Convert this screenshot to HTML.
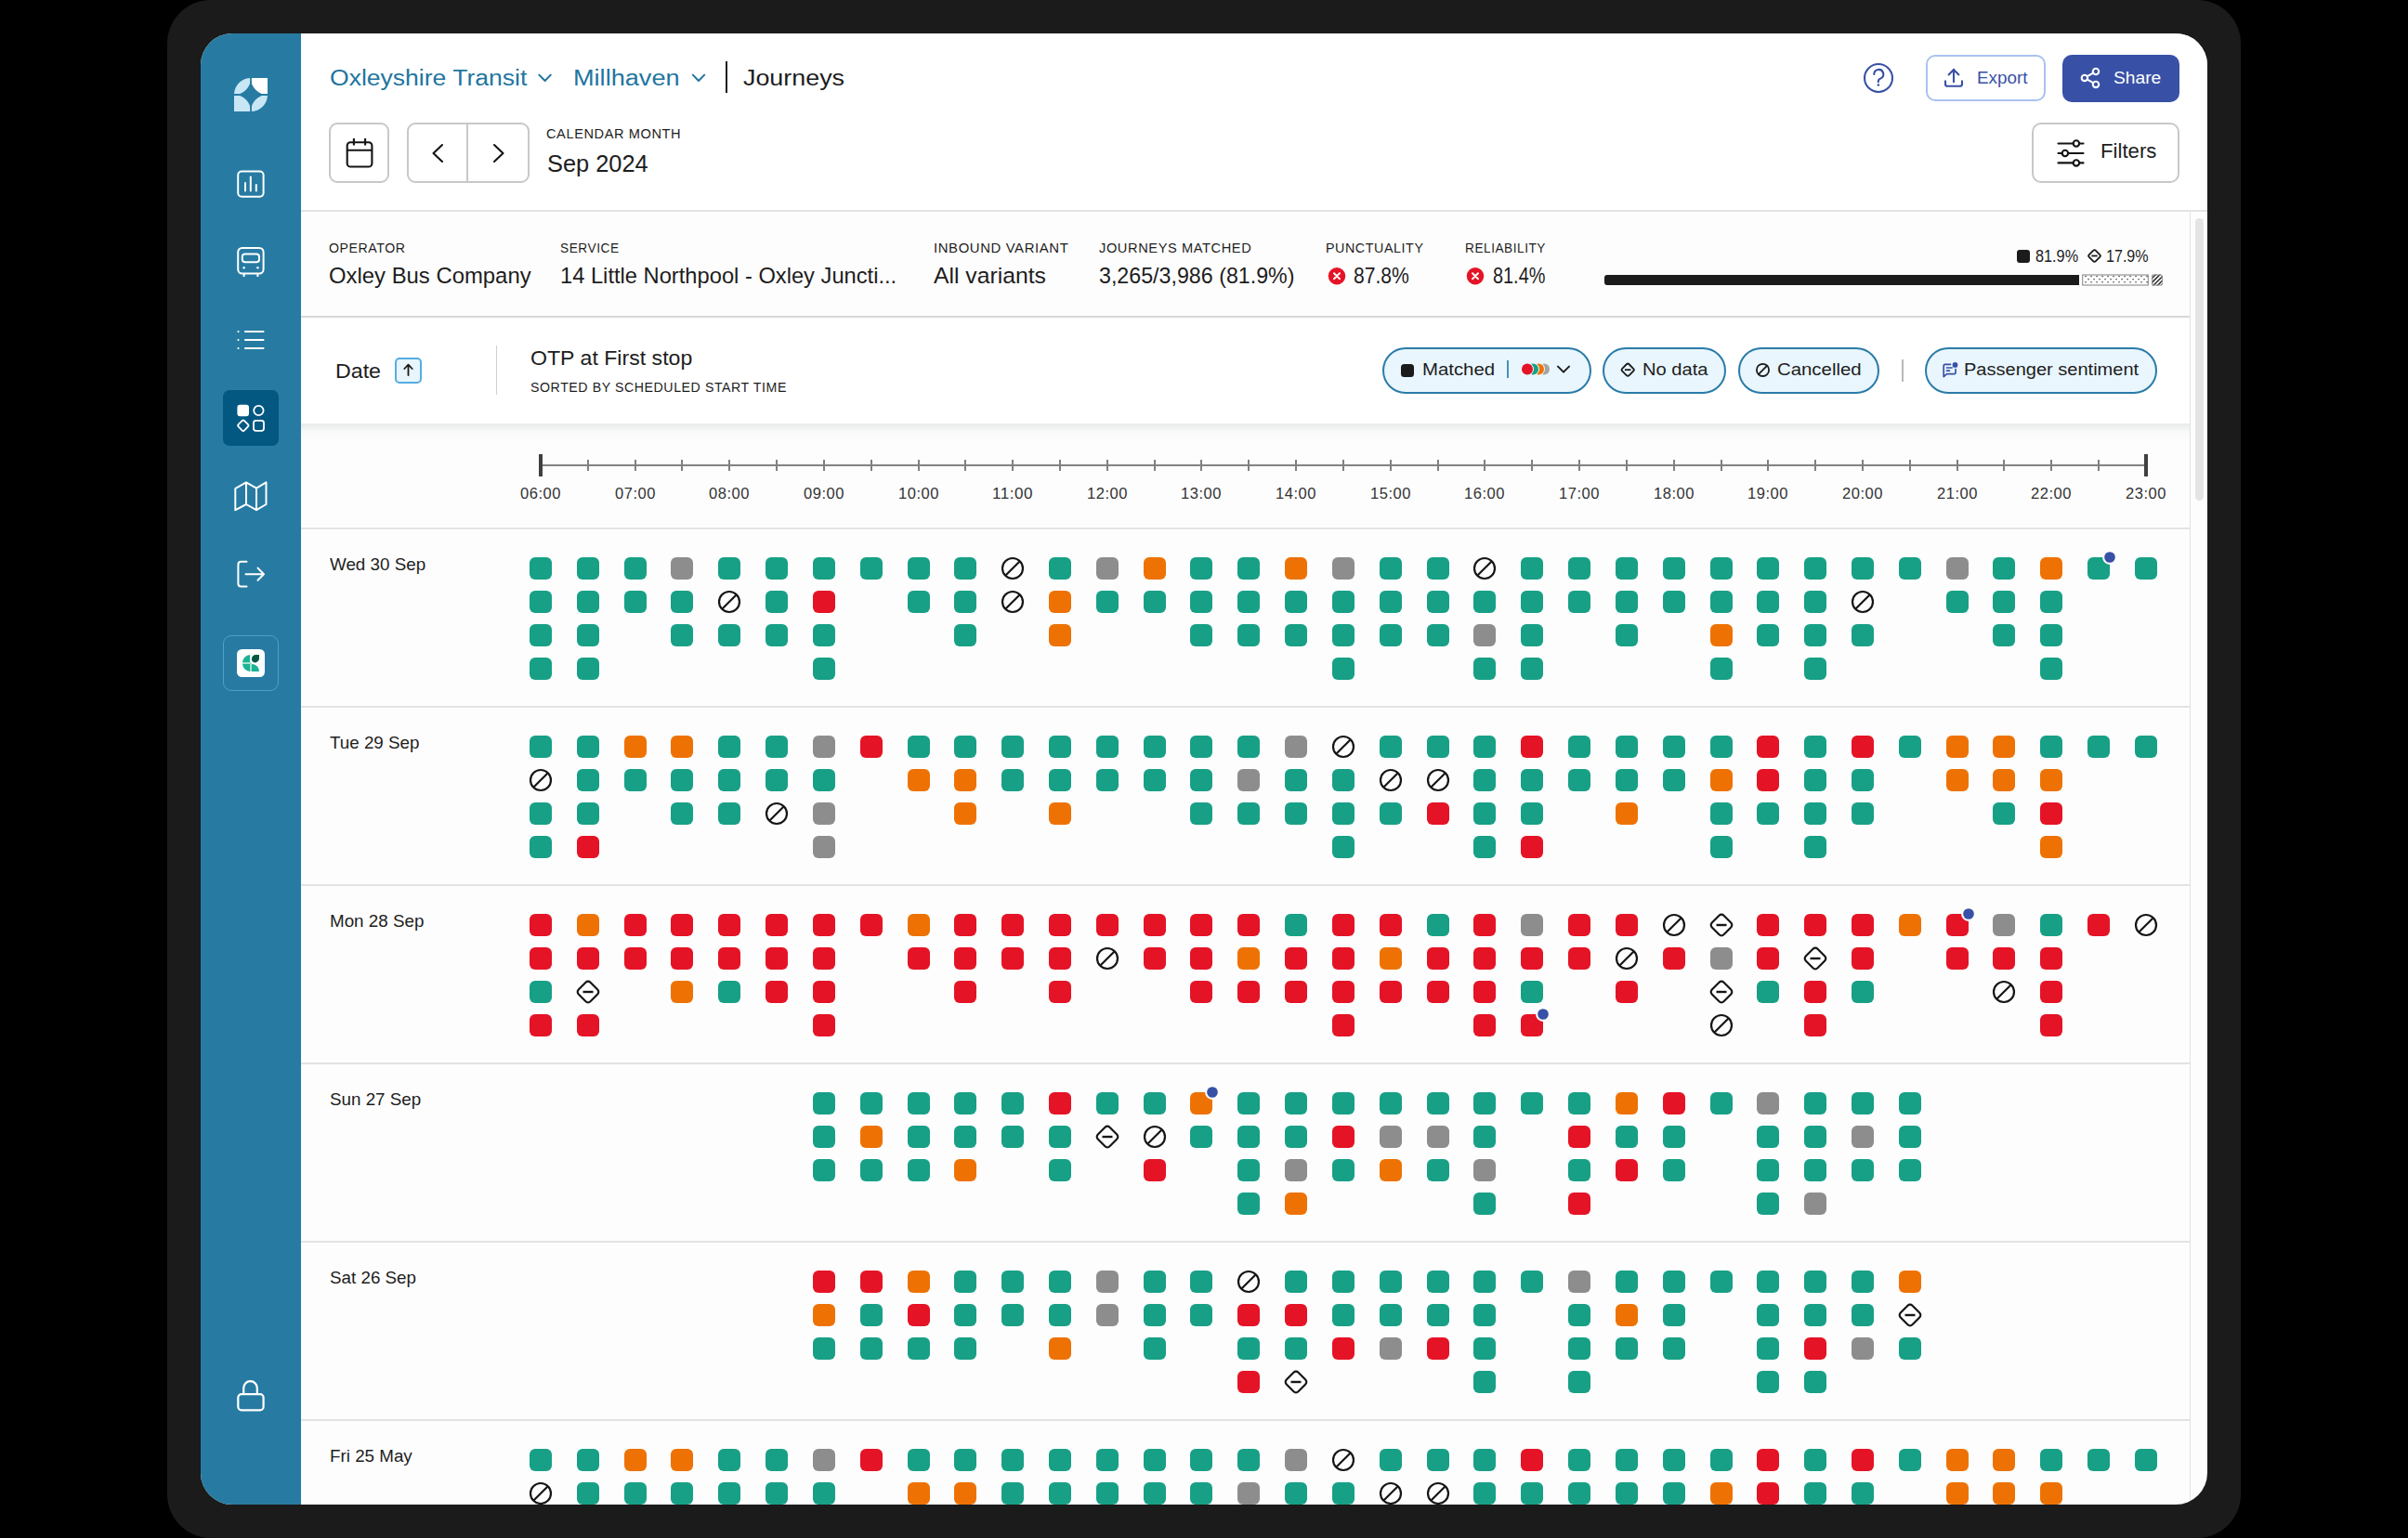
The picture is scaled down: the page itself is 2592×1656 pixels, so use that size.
<!DOCTYPE html><html><head><meta charset="utf-8"><style>
html,body{margin:0;padding:0;background:#000;}
body{width:2592px;height:1656px;overflow:hidden;position:relative;font-family:"Liberation Sans",sans-serif;}
#bezel{position:absolute;left:180px;top:0;width:2232px;height:1656px;border-radius:47px;background:#1b1b1b;}
#screen{position:absolute;left:216px;top:36px;width:2160px;height:1584px;border-radius:34px;background:#fdfdfd;overflow:hidden;}
</style></head><body><div id="bezel"></div><div id="screen">
<div style="position:absolute;left:0.00px;top:0.00px;width:108.00px;height:1584.00px;background:#277ba2"></div>
<div style="position:absolute;left:108.00px;top:0.00px;width:2052.00px;height:190.50px;background:#ffffff"></div>
<div style="position:absolute;left:108.00px;top:190.20px;width:2052.00px;height:2.00px;background:#e3e3e3"></div>
<div style="position:absolute;left:108.00px;top:304.20px;width:2033.00px;height:2.00px;background:#d8d8d8"></div>
<div style="position:absolute;left:108.00px;top:306.20px;width:2033.00px;height:113.80px;background:#ffffff"></div>
<div style="position:absolute;left:108px;top:420px;width:2033px;height:20px;background:linear-gradient(#e8e9ea,rgba(246,247,247,0.6) 45%,rgba(253,253,253,0))"></div>
<div style="position:absolute;left:2140.50px;top:191.00px;width:1.50px;height:1393.00px;background:#e2e2e2"></div>
<div style="position:absolute;left:2146.50px;top:199.00px;width:9.00px;height:304.00px;background:#e4e4e4;border-radius:5px"></div>
<div style="position:absolute;left:108.00px;top:532.20px;width:2033.00px;height:2.00px;background:#e3e3e3"></div>
<div style="position:absolute;left:354.00px;top:564.00px;width:24.00px;height:24.00px;background:#17a086;border-radius:6px"></div>
<div style="position:absolute;left:354.00px;top:600.00px;width:24.00px;height:24.00px;background:#17a086;border-radius:6px"></div>
<div style="position:absolute;left:354.00px;top:636.00px;width:24.00px;height:24.00px;background:#17a086;border-radius:6px"></div>
<div style="position:absolute;left:354.00px;top:672.00px;width:24.00px;height:24.00px;background:#17a086;border-radius:6px"></div>
<div style="position:absolute;left:404.82px;top:564.00px;width:24.00px;height:24.00px;background:#17a086;border-radius:6px"></div>
<div style="position:absolute;left:404.82px;top:600.00px;width:24.00px;height:24.00px;background:#17a086;border-radius:6px"></div>
<div style="position:absolute;left:404.82px;top:636.00px;width:24.00px;height:24.00px;background:#17a086;border-radius:6px"></div>
<div style="position:absolute;left:404.82px;top:672.00px;width:24.00px;height:24.00px;background:#17a086;border-radius:6px"></div>
<div style="position:absolute;left:455.64px;top:564.00px;width:24.00px;height:24.00px;background:#17a086;border-radius:6px"></div>
<div style="position:absolute;left:455.64px;top:600.00px;width:24.00px;height:24.00px;background:#17a086;border-radius:6px"></div>
<div style="position:absolute;left:506.46px;top:564.00px;width:24.00px;height:24.00px;background:#8d8d8d;border-radius:6px"></div>
<div style="position:absolute;left:506.46px;top:600.00px;width:24.00px;height:24.00px;background:#17a086;border-radius:6px"></div>
<div style="position:absolute;left:506.46px;top:636.00px;width:24.00px;height:24.00px;background:#17a086;border-radius:6px"></div>
<div style="position:absolute;left:557.28px;top:564.00px;width:24.00px;height:24.00px;background:#17a086;border-radius:6px"></div>
<svg style="position:absolute;left:556.28px;top:599.00px;" width="26" height="26" viewBox="772.28 635 26 26"><circle cx="785.28" cy="648" r="11" fill="none" stroke="#161616" stroke-width="2.2"/><line x1="793.0799999999999" y1="640.2" x2="777.48" y2="655.8" stroke="#161616" stroke-width="2.2"/></svg>
<div style="position:absolute;left:557.28px;top:636.00px;width:24.00px;height:24.00px;background:#17a086;border-radius:6px"></div>
<div style="position:absolute;left:608.10px;top:564.00px;width:24.00px;height:24.00px;background:#17a086;border-radius:6px"></div>
<div style="position:absolute;left:608.10px;top:600.00px;width:24.00px;height:24.00px;background:#17a086;border-radius:6px"></div>
<div style="position:absolute;left:608.10px;top:636.00px;width:24.00px;height:24.00px;background:#17a086;border-radius:6px"></div>
<div style="position:absolute;left:658.92px;top:564.00px;width:24.00px;height:24.00px;background:#17a086;border-radius:6px"></div>
<div style="position:absolute;left:658.92px;top:600.00px;width:24.00px;height:24.00px;background:#e51326;border-radius:6px"></div>
<div style="position:absolute;left:658.92px;top:636.00px;width:24.00px;height:24.00px;background:#17a086;border-radius:6px"></div>
<div style="position:absolute;left:658.92px;top:672.00px;width:24.00px;height:24.00px;background:#17a086;border-radius:6px"></div>
<div style="position:absolute;left:709.74px;top:564.00px;width:24.00px;height:24.00px;background:#17a086;border-radius:6px"></div>
<div style="position:absolute;left:760.56px;top:564.00px;width:24.00px;height:24.00px;background:#17a086;border-radius:6px"></div>
<div style="position:absolute;left:760.56px;top:600.00px;width:24.00px;height:24.00px;background:#17a086;border-radius:6px"></div>
<div style="position:absolute;left:811.38px;top:564.00px;width:24.00px;height:24.00px;background:#17a086;border-radius:6px"></div>
<div style="position:absolute;left:811.38px;top:600.00px;width:24.00px;height:24.00px;background:#17a086;border-radius:6px"></div>
<div style="position:absolute;left:811.38px;top:636.00px;width:24.00px;height:24.00px;background:#17a086;border-radius:6px"></div>
<svg style="position:absolute;left:861.20px;top:563.00px;" width="26" height="26" viewBox="1077.2 599 26 26"><circle cx="1090.2" cy="612" r="11" fill="none" stroke="#161616" stroke-width="2.2"/><line x1="1098.0" y1="604.2" x2="1082.4" y2="619.8" stroke="#161616" stroke-width="2.2"/></svg>
<svg style="position:absolute;left:861.20px;top:599.00px;" width="26" height="26" viewBox="1077.2 635 26 26"><circle cx="1090.2" cy="648" r="11" fill="none" stroke="#161616" stroke-width="2.2"/><line x1="1098.0" y1="640.2" x2="1082.4" y2="655.8" stroke="#161616" stroke-width="2.2"/></svg>
<div style="position:absolute;left:913.02px;top:564.00px;width:24.00px;height:24.00px;background:#17a086;border-radius:6px"></div>
<div style="position:absolute;left:913.02px;top:600.00px;width:24.00px;height:24.00px;background:#ee7203;border-radius:6px"></div>
<div style="position:absolute;left:913.02px;top:636.00px;width:24.00px;height:24.00px;background:#ee7203;border-radius:6px"></div>
<div style="position:absolute;left:963.84px;top:564.00px;width:24.00px;height:24.00px;background:#8d8d8d;border-radius:6px"></div>
<div style="position:absolute;left:963.84px;top:600.00px;width:24.00px;height:24.00px;background:#17a086;border-radius:6px"></div>
<div style="position:absolute;left:1014.66px;top:564.00px;width:24.00px;height:24.00px;background:#ee7203;border-radius:6px"></div>
<div style="position:absolute;left:1014.66px;top:600.00px;width:24.00px;height:24.00px;background:#17a086;border-radius:6px"></div>
<div style="position:absolute;left:1065.48px;top:564.00px;width:24.00px;height:24.00px;background:#17a086;border-radius:6px"></div>
<div style="position:absolute;left:1065.48px;top:600.00px;width:24.00px;height:24.00px;background:#17a086;border-radius:6px"></div>
<div style="position:absolute;left:1065.48px;top:636.00px;width:24.00px;height:24.00px;background:#17a086;border-radius:6px"></div>
<div style="position:absolute;left:1116.30px;top:564.00px;width:24.00px;height:24.00px;background:#17a086;border-radius:6px"></div>
<div style="position:absolute;left:1116.30px;top:600.00px;width:24.00px;height:24.00px;background:#17a086;border-radius:6px"></div>
<div style="position:absolute;left:1116.30px;top:636.00px;width:24.00px;height:24.00px;background:#17a086;border-radius:6px"></div>
<div style="position:absolute;left:1167.12px;top:564.00px;width:24.00px;height:24.00px;background:#ee7203;border-radius:6px"></div>
<div style="position:absolute;left:1167.12px;top:600.00px;width:24.00px;height:24.00px;background:#17a086;border-radius:6px"></div>
<div style="position:absolute;left:1167.12px;top:636.00px;width:24.00px;height:24.00px;background:#17a086;border-radius:6px"></div>
<div style="position:absolute;left:1217.94px;top:564.00px;width:24.00px;height:24.00px;background:#8d8d8d;border-radius:6px"></div>
<div style="position:absolute;left:1217.94px;top:600.00px;width:24.00px;height:24.00px;background:#17a086;border-radius:6px"></div>
<div style="position:absolute;left:1217.94px;top:636.00px;width:24.00px;height:24.00px;background:#17a086;border-radius:6px"></div>
<div style="position:absolute;left:1217.94px;top:672.00px;width:24.00px;height:24.00px;background:#17a086;border-radius:6px"></div>
<div style="position:absolute;left:1268.76px;top:564.00px;width:24.00px;height:24.00px;background:#17a086;border-radius:6px"></div>
<div style="position:absolute;left:1268.76px;top:600.00px;width:24.00px;height:24.00px;background:#17a086;border-radius:6px"></div>
<div style="position:absolute;left:1268.76px;top:636.00px;width:24.00px;height:24.00px;background:#17a086;border-radius:6px"></div>
<div style="position:absolute;left:1319.58px;top:564.00px;width:24.00px;height:24.00px;background:#17a086;border-radius:6px"></div>
<div style="position:absolute;left:1319.58px;top:600.00px;width:24.00px;height:24.00px;background:#17a086;border-radius:6px"></div>
<div style="position:absolute;left:1319.58px;top:636.00px;width:24.00px;height:24.00px;background:#17a086;border-radius:6px"></div>
<svg style="position:absolute;left:1369.40px;top:563.00px;" width="26" height="26" viewBox="1585.4 599 26 26"><circle cx="1598.4" cy="612" r="11" fill="none" stroke="#161616" stroke-width="2.2"/><line x1="1606.2" y1="604.2" x2="1590.6000000000001" y2="619.8" stroke="#161616" stroke-width="2.2"/></svg>
<div style="position:absolute;left:1370.40px;top:600.00px;width:24.00px;height:24.00px;background:#17a086;border-radius:6px"></div>
<div style="position:absolute;left:1370.40px;top:636.00px;width:24.00px;height:24.00px;background:#8d8d8d;border-radius:6px"></div>
<div style="position:absolute;left:1370.40px;top:672.00px;width:24.00px;height:24.00px;background:#17a086;border-radius:6px"></div>
<div style="position:absolute;left:1421.22px;top:564.00px;width:24.00px;height:24.00px;background:#17a086;border-radius:6px"></div>
<div style="position:absolute;left:1421.22px;top:600.00px;width:24.00px;height:24.00px;background:#17a086;border-radius:6px"></div>
<div style="position:absolute;left:1421.22px;top:636.00px;width:24.00px;height:24.00px;background:#17a086;border-radius:6px"></div>
<div style="position:absolute;left:1421.22px;top:672.00px;width:24.00px;height:24.00px;background:#17a086;border-radius:6px"></div>
<div style="position:absolute;left:1472.04px;top:564.00px;width:24.00px;height:24.00px;background:#17a086;border-radius:6px"></div>
<div style="position:absolute;left:1472.04px;top:600.00px;width:24.00px;height:24.00px;background:#17a086;border-radius:6px"></div>
<div style="position:absolute;left:1522.86px;top:564.00px;width:24.00px;height:24.00px;background:#17a086;border-radius:6px"></div>
<div style="position:absolute;left:1522.86px;top:600.00px;width:24.00px;height:24.00px;background:#17a086;border-radius:6px"></div>
<div style="position:absolute;left:1522.86px;top:636.00px;width:24.00px;height:24.00px;background:#17a086;border-radius:6px"></div>
<div style="position:absolute;left:1573.68px;top:564.00px;width:24.00px;height:24.00px;background:#17a086;border-radius:6px"></div>
<div style="position:absolute;left:1573.68px;top:600.00px;width:24.00px;height:24.00px;background:#17a086;border-radius:6px"></div>
<div style="position:absolute;left:1624.50px;top:564.00px;width:24.00px;height:24.00px;background:#17a086;border-radius:6px"></div>
<div style="position:absolute;left:1624.50px;top:600.00px;width:24.00px;height:24.00px;background:#17a086;border-radius:6px"></div>
<div style="position:absolute;left:1624.50px;top:636.00px;width:24.00px;height:24.00px;background:#ee7203;border-radius:6px"></div>
<div style="position:absolute;left:1624.50px;top:672.00px;width:24.00px;height:24.00px;background:#17a086;border-radius:6px"></div>
<div style="position:absolute;left:1675.32px;top:564.00px;width:24.00px;height:24.00px;background:#17a086;border-radius:6px"></div>
<div style="position:absolute;left:1675.32px;top:600.00px;width:24.00px;height:24.00px;background:#17a086;border-radius:6px"></div>
<div style="position:absolute;left:1675.32px;top:636.00px;width:24.00px;height:24.00px;background:#17a086;border-radius:6px"></div>
<div style="position:absolute;left:1726.14px;top:564.00px;width:24.00px;height:24.00px;background:#17a086;border-radius:6px"></div>
<div style="position:absolute;left:1726.14px;top:600.00px;width:24.00px;height:24.00px;background:#17a086;border-radius:6px"></div>
<div style="position:absolute;left:1726.14px;top:636.00px;width:24.00px;height:24.00px;background:#17a086;border-radius:6px"></div>
<div style="position:absolute;left:1726.14px;top:672.00px;width:24.00px;height:24.00px;background:#17a086;border-radius:6px"></div>
<div style="position:absolute;left:1776.96px;top:564.00px;width:24.00px;height:24.00px;background:#17a086;border-radius:6px"></div>
<svg style="position:absolute;left:1775.96px;top:599.00px;" width="26" height="26" viewBox="1991.96 635 26 26"><circle cx="2004.96" cy="648" r="11" fill="none" stroke="#161616" stroke-width="2.2"/><line x1="2012.76" y1="640.2" x2="1997.16" y2="655.8" stroke="#161616" stroke-width="2.2"/></svg>
<div style="position:absolute;left:1776.96px;top:636.00px;width:24.00px;height:24.00px;background:#17a086;border-radius:6px"></div>
<div style="position:absolute;left:1827.78px;top:564.00px;width:24.00px;height:24.00px;background:#17a086;border-radius:6px"></div>
<div style="position:absolute;left:1878.60px;top:564.00px;width:24.00px;height:24.00px;background:#8d8d8d;border-radius:6px"></div>
<div style="position:absolute;left:1878.60px;top:600.00px;width:24.00px;height:24.00px;background:#17a086;border-radius:6px"></div>
<div style="position:absolute;left:1929.42px;top:564.00px;width:24.00px;height:24.00px;background:#17a086;border-radius:6px"></div>
<div style="position:absolute;left:1929.42px;top:600.00px;width:24.00px;height:24.00px;background:#17a086;border-radius:6px"></div>
<div style="position:absolute;left:1929.42px;top:636.00px;width:24.00px;height:24.00px;background:#17a086;border-radius:6px"></div>
<div style="position:absolute;left:1980.24px;top:564.00px;width:24.00px;height:24.00px;background:#ee7203;border-radius:6px"></div>
<div style="position:absolute;left:1980.24px;top:600.00px;width:24.00px;height:24.00px;background:#17a086;border-radius:6px"></div>
<div style="position:absolute;left:1980.24px;top:636.00px;width:24.00px;height:24.00px;background:#17a086;border-radius:6px"></div>
<div style="position:absolute;left:1980.24px;top:672.00px;width:24.00px;height:24.00px;background:#17a086;border-radius:6px"></div>
<div style="position:absolute;left:2031.06px;top:564.00px;width:24.00px;height:24.00px;background:#17a086;border-radius:6px"></div>
<svg style="position:absolute;left:2046.06px;top:555.00px;" width="18" height="18" viewBox="2262.06 591 18 18"><circle cx="2271.06" cy="600" r="6.9" fill="#3851a6" stroke="#fdfdfd" stroke-width="2.1"/></svg>
<div style="position:absolute;left:2081.88px;top:564.00px;width:24.00px;height:24.00px;background:#17a086;border-radius:6px"></div>
<div style="position:absolute;left:108.00px;top:724.20px;width:2033.00px;height:2.00px;background:#e3e3e3"></div>
<div style="position:absolute;left:354.00px;top:756.00px;width:24.00px;height:24.00px;background:#17a086;border-radius:6px"></div>
<svg style="position:absolute;left:353.00px;top:791.00px;" width="26" height="26" viewBox="569.0 827 26 26"><circle cx="582.0" cy="840" r="11" fill="none" stroke="#161616" stroke-width="2.2"/><line x1="589.8" y1="832.2" x2="574.2" y2="847.8" stroke="#161616" stroke-width="2.2"/></svg>
<div style="position:absolute;left:354.00px;top:828.00px;width:24.00px;height:24.00px;background:#17a086;border-radius:6px"></div>
<div style="position:absolute;left:354.00px;top:864.00px;width:24.00px;height:24.00px;background:#17a086;border-radius:6px"></div>
<div style="position:absolute;left:404.82px;top:756.00px;width:24.00px;height:24.00px;background:#17a086;border-radius:6px"></div>
<div style="position:absolute;left:404.82px;top:792.00px;width:24.00px;height:24.00px;background:#17a086;border-radius:6px"></div>
<div style="position:absolute;left:404.82px;top:828.00px;width:24.00px;height:24.00px;background:#17a086;border-radius:6px"></div>
<div style="position:absolute;left:404.82px;top:864.00px;width:24.00px;height:24.00px;background:#e51326;border-radius:6px"></div>
<div style="position:absolute;left:455.64px;top:756.00px;width:24.00px;height:24.00px;background:#ee7203;border-radius:6px"></div>
<div style="position:absolute;left:455.64px;top:792.00px;width:24.00px;height:24.00px;background:#17a086;border-radius:6px"></div>
<div style="position:absolute;left:506.46px;top:756.00px;width:24.00px;height:24.00px;background:#ee7203;border-radius:6px"></div>
<div style="position:absolute;left:506.46px;top:792.00px;width:24.00px;height:24.00px;background:#17a086;border-radius:6px"></div>
<div style="position:absolute;left:506.46px;top:828.00px;width:24.00px;height:24.00px;background:#17a086;border-radius:6px"></div>
<div style="position:absolute;left:557.28px;top:756.00px;width:24.00px;height:24.00px;background:#17a086;border-radius:6px"></div>
<div style="position:absolute;left:557.28px;top:792.00px;width:24.00px;height:24.00px;background:#17a086;border-radius:6px"></div>
<div style="position:absolute;left:557.28px;top:828.00px;width:24.00px;height:24.00px;background:#17a086;border-radius:6px"></div>
<div style="position:absolute;left:608.10px;top:756.00px;width:24.00px;height:24.00px;background:#17a086;border-radius:6px"></div>
<div style="position:absolute;left:608.10px;top:792.00px;width:24.00px;height:24.00px;background:#17a086;border-radius:6px"></div>
<svg style="position:absolute;left:607.10px;top:827.00px;" width="26" height="26" viewBox="823.1 863 26 26"><circle cx="836.1" cy="876" r="11" fill="none" stroke="#161616" stroke-width="2.2"/><line x1="843.9" y1="868.2" x2="828.3000000000001" y2="883.8" stroke="#161616" stroke-width="2.2"/></svg>
<div style="position:absolute;left:658.92px;top:756.00px;width:24.00px;height:24.00px;background:#8d8d8d;border-radius:6px"></div>
<div style="position:absolute;left:658.92px;top:792.00px;width:24.00px;height:24.00px;background:#17a086;border-radius:6px"></div>
<div style="position:absolute;left:658.92px;top:828.00px;width:24.00px;height:24.00px;background:#8d8d8d;border-radius:6px"></div>
<div style="position:absolute;left:658.92px;top:864.00px;width:24.00px;height:24.00px;background:#8d8d8d;border-radius:6px"></div>
<div style="position:absolute;left:709.74px;top:756.00px;width:24.00px;height:24.00px;background:#e51326;border-radius:6px"></div>
<div style="position:absolute;left:760.56px;top:756.00px;width:24.00px;height:24.00px;background:#17a086;border-radius:6px"></div>
<div style="position:absolute;left:760.56px;top:792.00px;width:24.00px;height:24.00px;background:#ee7203;border-radius:6px"></div>
<div style="position:absolute;left:811.38px;top:756.00px;width:24.00px;height:24.00px;background:#17a086;border-radius:6px"></div>
<div style="position:absolute;left:811.38px;top:792.00px;width:24.00px;height:24.00px;background:#ee7203;border-radius:6px"></div>
<div style="position:absolute;left:811.38px;top:828.00px;width:24.00px;height:24.00px;background:#ee7203;border-radius:6px"></div>
<div style="position:absolute;left:862.20px;top:756.00px;width:24.00px;height:24.00px;background:#17a086;border-radius:6px"></div>
<div style="position:absolute;left:862.20px;top:792.00px;width:24.00px;height:24.00px;background:#17a086;border-radius:6px"></div>
<div style="position:absolute;left:913.02px;top:756.00px;width:24.00px;height:24.00px;background:#17a086;border-radius:6px"></div>
<div style="position:absolute;left:913.02px;top:792.00px;width:24.00px;height:24.00px;background:#17a086;border-radius:6px"></div>
<div style="position:absolute;left:913.02px;top:828.00px;width:24.00px;height:24.00px;background:#ee7203;border-radius:6px"></div>
<div style="position:absolute;left:963.84px;top:756.00px;width:24.00px;height:24.00px;background:#17a086;border-radius:6px"></div>
<div style="position:absolute;left:963.84px;top:792.00px;width:24.00px;height:24.00px;background:#17a086;border-radius:6px"></div>
<div style="position:absolute;left:1014.66px;top:756.00px;width:24.00px;height:24.00px;background:#17a086;border-radius:6px"></div>
<div style="position:absolute;left:1014.66px;top:792.00px;width:24.00px;height:24.00px;background:#17a086;border-radius:6px"></div>
<div style="position:absolute;left:1065.48px;top:756.00px;width:24.00px;height:24.00px;background:#17a086;border-radius:6px"></div>
<div style="position:absolute;left:1065.48px;top:792.00px;width:24.00px;height:24.00px;background:#17a086;border-radius:6px"></div>
<div style="position:absolute;left:1065.48px;top:828.00px;width:24.00px;height:24.00px;background:#17a086;border-radius:6px"></div>
<div style="position:absolute;left:1116.30px;top:756.00px;width:24.00px;height:24.00px;background:#17a086;border-radius:6px"></div>
<div style="position:absolute;left:1116.30px;top:792.00px;width:24.00px;height:24.00px;background:#8d8d8d;border-radius:6px"></div>
<div style="position:absolute;left:1116.30px;top:828.00px;width:24.00px;height:24.00px;background:#17a086;border-radius:6px"></div>
<div style="position:absolute;left:1167.12px;top:756.00px;width:24.00px;height:24.00px;background:#8d8d8d;border-radius:6px"></div>
<div style="position:absolute;left:1167.12px;top:792.00px;width:24.00px;height:24.00px;background:#17a086;border-radius:6px"></div>
<div style="position:absolute;left:1167.12px;top:828.00px;width:24.00px;height:24.00px;background:#17a086;border-radius:6px"></div>
<svg style="position:absolute;left:1216.94px;top:755.00px;" width="26" height="26" viewBox="1432.94 791 26 26"><circle cx="1445.94" cy="804" r="11" fill="none" stroke="#161616" stroke-width="2.2"/><line x1="1453.74" y1="796.2" x2="1438.14" y2="811.8" stroke="#161616" stroke-width="2.2"/></svg>
<div style="position:absolute;left:1217.94px;top:792.00px;width:24.00px;height:24.00px;background:#17a086;border-radius:6px"></div>
<div style="position:absolute;left:1217.94px;top:828.00px;width:24.00px;height:24.00px;background:#17a086;border-radius:6px"></div>
<div style="position:absolute;left:1217.94px;top:864.00px;width:24.00px;height:24.00px;background:#17a086;border-radius:6px"></div>
<div style="position:absolute;left:1268.76px;top:756.00px;width:24.00px;height:24.00px;background:#17a086;border-radius:6px"></div>
<svg style="position:absolute;left:1267.76px;top:791.00px;" width="26" height="26" viewBox="1483.76 827 26 26"><circle cx="1496.76" cy="840" r="11" fill="none" stroke="#161616" stroke-width="2.2"/><line x1="1504.56" y1="832.2" x2="1488.96" y2="847.8" stroke="#161616" stroke-width="2.2"/></svg>
<div style="position:absolute;left:1268.76px;top:828.00px;width:24.00px;height:24.00px;background:#17a086;border-radius:6px"></div>
<div style="position:absolute;left:1319.58px;top:756.00px;width:24.00px;height:24.00px;background:#17a086;border-radius:6px"></div>
<svg style="position:absolute;left:1318.58px;top:791.00px;" width="26" height="26" viewBox="1534.58 827 26 26"><circle cx="1547.58" cy="840" r="11" fill="none" stroke="#161616" stroke-width="2.2"/><line x1="1555.3799999999999" y1="832.2" x2="1539.78" y2="847.8" stroke="#161616" stroke-width="2.2"/></svg>
<div style="position:absolute;left:1319.58px;top:828.00px;width:24.00px;height:24.00px;background:#e51326;border-radius:6px"></div>
<div style="position:absolute;left:1370.40px;top:756.00px;width:24.00px;height:24.00px;background:#17a086;border-radius:6px"></div>
<div style="position:absolute;left:1370.40px;top:792.00px;width:24.00px;height:24.00px;background:#17a086;border-radius:6px"></div>
<div style="position:absolute;left:1370.40px;top:828.00px;width:24.00px;height:24.00px;background:#17a086;border-radius:6px"></div>
<div style="position:absolute;left:1370.40px;top:864.00px;width:24.00px;height:24.00px;background:#17a086;border-radius:6px"></div>
<div style="position:absolute;left:1421.22px;top:756.00px;width:24.00px;height:24.00px;background:#e51326;border-radius:6px"></div>
<div style="position:absolute;left:1421.22px;top:792.00px;width:24.00px;height:24.00px;background:#17a086;border-radius:6px"></div>
<div style="position:absolute;left:1421.22px;top:828.00px;width:24.00px;height:24.00px;background:#17a086;border-radius:6px"></div>
<div style="position:absolute;left:1421.22px;top:864.00px;width:24.00px;height:24.00px;background:#e51326;border-radius:6px"></div>
<div style="position:absolute;left:1472.04px;top:756.00px;width:24.00px;height:24.00px;background:#17a086;border-radius:6px"></div>
<div style="position:absolute;left:1472.04px;top:792.00px;width:24.00px;height:24.00px;background:#17a086;border-radius:6px"></div>
<div style="position:absolute;left:1522.86px;top:756.00px;width:24.00px;height:24.00px;background:#17a086;border-radius:6px"></div>
<div style="position:absolute;left:1522.86px;top:792.00px;width:24.00px;height:24.00px;background:#17a086;border-radius:6px"></div>
<div style="position:absolute;left:1522.86px;top:828.00px;width:24.00px;height:24.00px;background:#ee7203;border-radius:6px"></div>
<div style="position:absolute;left:1573.68px;top:756.00px;width:24.00px;height:24.00px;background:#17a086;border-radius:6px"></div>
<div style="position:absolute;left:1573.68px;top:792.00px;width:24.00px;height:24.00px;background:#17a086;border-radius:6px"></div>
<div style="position:absolute;left:1624.50px;top:756.00px;width:24.00px;height:24.00px;background:#17a086;border-radius:6px"></div>
<div style="position:absolute;left:1624.50px;top:792.00px;width:24.00px;height:24.00px;background:#ee7203;border-radius:6px"></div>
<div style="position:absolute;left:1624.50px;top:828.00px;width:24.00px;height:24.00px;background:#17a086;border-radius:6px"></div>
<div style="position:absolute;left:1624.50px;top:864.00px;width:24.00px;height:24.00px;background:#17a086;border-radius:6px"></div>
<div style="position:absolute;left:1675.32px;top:756.00px;width:24.00px;height:24.00px;background:#e51326;border-radius:6px"></div>
<div style="position:absolute;left:1675.32px;top:792.00px;width:24.00px;height:24.00px;background:#e51326;border-radius:6px"></div>
<div style="position:absolute;left:1675.32px;top:828.00px;width:24.00px;height:24.00px;background:#17a086;border-radius:6px"></div>
<div style="position:absolute;left:1726.14px;top:756.00px;width:24.00px;height:24.00px;background:#17a086;border-radius:6px"></div>
<div style="position:absolute;left:1726.14px;top:792.00px;width:24.00px;height:24.00px;background:#17a086;border-radius:6px"></div>
<div style="position:absolute;left:1726.14px;top:828.00px;width:24.00px;height:24.00px;background:#17a086;border-radius:6px"></div>
<div style="position:absolute;left:1726.14px;top:864.00px;width:24.00px;height:24.00px;background:#17a086;border-radius:6px"></div>
<div style="position:absolute;left:1776.96px;top:756.00px;width:24.00px;height:24.00px;background:#e51326;border-radius:6px"></div>
<div style="position:absolute;left:1776.96px;top:792.00px;width:24.00px;height:24.00px;background:#17a086;border-radius:6px"></div>
<div style="position:absolute;left:1776.96px;top:828.00px;width:24.00px;height:24.00px;background:#17a086;border-radius:6px"></div>
<div style="position:absolute;left:1827.78px;top:756.00px;width:24.00px;height:24.00px;background:#17a086;border-radius:6px"></div>
<div style="position:absolute;left:1878.60px;top:756.00px;width:24.00px;height:24.00px;background:#ee7203;border-radius:6px"></div>
<div style="position:absolute;left:1878.60px;top:792.00px;width:24.00px;height:24.00px;background:#ee7203;border-radius:6px"></div>
<div style="position:absolute;left:1929.42px;top:756.00px;width:24.00px;height:24.00px;background:#ee7203;border-radius:6px"></div>
<div style="position:absolute;left:1929.42px;top:792.00px;width:24.00px;height:24.00px;background:#ee7203;border-radius:6px"></div>
<div style="position:absolute;left:1929.42px;top:828.00px;width:24.00px;height:24.00px;background:#17a086;border-radius:6px"></div>
<div style="position:absolute;left:1980.24px;top:756.00px;width:24.00px;height:24.00px;background:#17a086;border-radius:6px"></div>
<div style="position:absolute;left:1980.24px;top:792.00px;width:24.00px;height:24.00px;background:#ee7203;border-radius:6px"></div>
<div style="position:absolute;left:1980.24px;top:828.00px;width:24.00px;height:24.00px;background:#e51326;border-radius:6px"></div>
<div style="position:absolute;left:1980.24px;top:864.00px;width:24.00px;height:24.00px;background:#ee7203;border-radius:6px"></div>
<div style="position:absolute;left:2031.06px;top:756.00px;width:24.00px;height:24.00px;background:#17a086;border-radius:6px"></div>
<div style="position:absolute;left:2081.88px;top:756.00px;width:24.00px;height:24.00px;background:#17a086;border-radius:6px"></div>
<div style="position:absolute;left:108.00px;top:916.20px;width:2033.00px;height:2.00px;background:#e3e3e3"></div>
<div style="position:absolute;left:354.00px;top:948.00px;width:24.00px;height:24.00px;background:#e51326;border-radius:6px"></div>
<div style="position:absolute;left:354.00px;top:984.00px;width:24.00px;height:24.00px;background:#e51326;border-radius:6px"></div>
<div style="position:absolute;left:354.00px;top:1020.00px;width:24.00px;height:24.00px;background:#17a086;border-radius:6px"></div>
<div style="position:absolute;left:354.00px;top:1056.00px;width:24.00px;height:24.00px;background:#e51326;border-radius:6px"></div>
<div style="position:absolute;left:404.82px;top:948.00px;width:24.00px;height:24.00px;background:#ee7203;border-radius:6px"></div>
<div style="position:absolute;left:404.82px;top:984.00px;width:24.00px;height:24.00px;background:#e51326;border-radius:6px"></div>
<svg style="position:absolute;left:401.82px;top:1017.00px;" width="30" height="30" viewBox="617.82 1053 30 30"><rect x="623.82" y="1059" width="18" height="18" rx="3.5" transform="rotate(45 632.82 1068)" fill="none" stroke="#161616" stroke-width="2.2"/><line x1="627.32" y1="1068" x2="638.32" y2="1068" stroke="#161616" stroke-width="2.4"/></svg>
<div style="position:absolute;left:404.82px;top:1056.00px;width:24.00px;height:24.00px;background:#e51326;border-radius:6px"></div>
<div style="position:absolute;left:455.64px;top:948.00px;width:24.00px;height:24.00px;background:#e51326;border-radius:6px"></div>
<div style="position:absolute;left:455.64px;top:984.00px;width:24.00px;height:24.00px;background:#e51326;border-radius:6px"></div>
<div style="position:absolute;left:506.46px;top:948.00px;width:24.00px;height:24.00px;background:#e51326;border-radius:6px"></div>
<div style="position:absolute;left:506.46px;top:984.00px;width:24.00px;height:24.00px;background:#e51326;border-radius:6px"></div>
<div style="position:absolute;left:506.46px;top:1020.00px;width:24.00px;height:24.00px;background:#ee7203;border-radius:6px"></div>
<div style="position:absolute;left:557.28px;top:948.00px;width:24.00px;height:24.00px;background:#e51326;border-radius:6px"></div>
<div style="position:absolute;left:557.28px;top:984.00px;width:24.00px;height:24.00px;background:#e51326;border-radius:6px"></div>
<div style="position:absolute;left:557.28px;top:1020.00px;width:24.00px;height:24.00px;background:#17a086;border-radius:6px"></div>
<div style="position:absolute;left:608.10px;top:948.00px;width:24.00px;height:24.00px;background:#e51326;border-radius:6px"></div>
<div style="position:absolute;left:608.10px;top:984.00px;width:24.00px;height:24.00px;background:#e51326;border-radius:6px"></div>
<div style="position:absolute;left:608.10px;top:1020.00px;width:24.00px;height:24.00px;background:#e51326;border-radius:6px"></div>
<div style="position:absolute;left:658.92px;top:948.00px;width:24.00px;height:24.00px;background:#e51326;border-radius:6px"></div>
<div style="position:absolute;left:658.92px;top:984.00px;width:24.00px;height:24.00px;background:#e51326;border-radius:6px"></div>
<div style="position:absolute;left:658.92px;top:1020.00px;width:24.00px;height:24.00px;background:#e51326;border-radius:6px"></div>
<div style="position:absolute;left:658.92px;top:1056.00px;width:24.00px;height:24.00px;background:#e51326;border-radius:6px"></div>
<div style="position:absolute;left:709.74px;top:948.00px;width:24.00px;height:24.00px;background:#e51326;border-radius:6px"></div>
<div style="position:absolute;left:760.56px;top:948.00px;width:24.00px;height:24.00px;background:#ee7203;border-radius:6px"></div>
<div style="position:absolute;left:760.56px;top:984.00px;width:24.00px;height:24.00px;background:#e51326;border-radius:6px"></div>
<div style="position:absolute;left:811.38px;top:948.00px;width:24.00px;height:24.00px;background:#e51326;border-radius:6px"></div>
<div style="position:absolute;left:811.38px;top:984.00px;width:24.00px;height:24.00px;background:#e51326;border-radius:6px"></div>
<div style="position:absolute;left:811.38px;top:1020.00px;width:24.00px;height:24.00px;background:#e51326;border-radius:6px"></div>
<div style="position:absolute;left:862.20px;top:948.00px;width:24.00px;height:24.00px;background:#e51326;border-radius:6px"></div>
<div style="position:absolute;left:862.20px;top:984.00px;width:24.00px;height:24.00px;background:#e51326;border-radius:6px"></div>
<div style="position:absolute;left:913.02px;top:948.00px;width:24.00px;height:24.00px;background:#e51326;border-radius:6px"></div>
<div style="position:absolute;left:913.02px;top:984.00px;width:24.00px;height:24.00px;background:#e51326;border-radius:6px"></div>
<div style="position:absolute;left:913.02px;top:1020.00px;width:24.00px;height:24.00px;background:#e51326;border-radius:6px"></div>
<div style="position:absolute;left:963.84px;top:948.00px;width:24.00px;height:24.00px;background:#e51326;border-radius:6px"></div>
<svg style="position:absolute;left:962.84px;top:983.00px;" width="26" height="26" viewBox="1178.8400000000001 1019 26 26"><circle cx="1191.8400000000001" cy="1032" r="11" fill="none" stroke="#161616" stroke-width="2.2"/><line x1="1199.64" y1="1024.2" x2="1184.0400000000002" y2="1039.8" stroke="#161616" stroke-width="2.2"/></svg>
<div style="position:absolute;left:1014.66px;top:948.00px;width:24.00px;height:24.00px;background:#e51326;border-radius:6px"></div>
<div style="position:absolute;left:1014.66px;top:984.00px;width:24.00px;height:24.00px;background:#e51326;border-radius:6px"></div>
<div style="position:absolute;left:1065.48px;top:948.00px;width:24.00px;height:24.00px;background:#e51326;border-radius:6px"></div>
<div style="position:absolute;left:1065.48px;top:984.00px;width:24.00px;height:24.00px;background:#e51326;border-radius:6px"></div>
<div style="position:absolute;left:1065.48px;top:1020.00px;width:24.00px;height:24.00px;background:#e51326;border-radius:6px"></div>
<div style="position:absolute;left:1116.30px;top:948.00px;width:24.00px;height:24.00px;background:#e51326;border-radius:6px"></div>
<div style="position:absolute;left:1116.30px;top:984.00px;width:24.00px;height:24.00px;background:#ee7203;border-radius:6px"></div>
<div style="position:absolute;left:1116.30px;top:1020.00px;width:24.00px;height:24.00px;background:#e51326;border-radius:6px"></div>
<div style="position:absolute;left:1167.12px;top:948.00px;width:24.00px;height:24.00px;background:#17a086;border-radius:6px"></div>
<div style="position:absolute;left:1167.12px;top:984.00px;width:24.00px;height:24.00px;background:#e51326;border-radius:6px"></div>
<div style="position:absolute;left:1167.12px;top:1020.00px;width:24.00px;height:24.00px;background:#e51326;border-radius:6px"></div>
<div style="position:absolute;left:1217.94px;top:948.00px;width:24.00px;height:24.00px;background:#e51326;border-radius:6px"></div>
<div style="position:absolute;left:1217.94px;top:984.00px;width:24.00px;height:24.00px;background:#e51326;border-radius:6px"></div>
<div style="position:absolute;left:1217.94px;top:1020.00px;width:24.00px;height:24.00px;background:#e51326;border-radius:6px"></div>
<div style="position:absolute;left:1217.94px;top:1056.00px;width:24.00px;height:24.00px;background:#e51326;border-radius:6px"></div>
<div style="position:absolute;left:1268.76px;top:948.00px;width:24.00px;height:24.00px;background:#e51326;border-radius:6px"></div>
<div style="position:absolute;left:1268.76px;top:984.00px;width:24.00px;height:24.00px;background:#ee7203;border-radius:6px"></div>
<div style="position:absolute;left:1268.76px;top:1020.00px;width:24.00px;height:24.00px;background:#e51326;border-radius:6px"></div>
<div style="position:absolute;left:1319.58px;top:948.00px;width:24.00px;height:24.00px;background:#17a086;border-radius:6px"></div>
<div style="position:absolute;left:1319.58px;top:984.00px;width:24.00px;height:24.00px;background:#e51326;border-radius:6px"></div>
<div style="position:absolute;left:1319.58px;top:1020.00px;width:24.00px;height:24.00px;background:#e51326;border-radius:6px"></div>
<div style="position:absolute;left:1370.40px;top:948.00px;width:24.00px;height:24.00px;background:#e51326;border-radius:6px"></div>
<div style="position:absolute;left:1370.40px;top:984.00px;width:24.00px;height:24.00px;background:#e51326;border-radius:6px"></div>
<div style="position:absolute;left:1370.40px;top:1020.00px;width:24.00px;height:24.00px;background:#e51326;border-radius:6px"></div>
<div style="position:absolute;left:1370.40px;top:1056.00px;width:24.00px;height:24.00px;background:#e51326;border-radius:6px"></div>
<div style="position:absolute;left:1421.22px;top:948.00px;width:24.00px;height:24.00px;background:#8d8d8d;border-radius:6px"></div>
<div style="position:absolute;left:1421.22px;top:984.00px;width:24.00px;height:24.00px;background:#e51326;border-radius:6px"></div>
<div style="position:absolute;left:1421.22px;top:1020.00px;width:24.00px;height:24.00px;background:#17a086;border-radius:6px"></div>
<div style="position:absolute;left:1421.22px;top:1056.00px;width:24.00px;height:24.00px;background:#e51326;border-radius:6px"></div>
<svg style="position:absolute;left:1436.22px;top:1047.00px;" width="18" height="18" viewBox="1652.22 1083 18 18"><circle cx="1661.22" cy="1092" r="6.9" fill="#3851a6" stroke="#fdfdfd" stroke-width="2.1"/></svg>
<div style="position:absolute;left:1472.04px;top:948.00px;width:24.00px;height:24.00px;background:#e51326;border-radius:6px"></div>
<div style="position:absolute;left:1472.04px;top:984.00px;width:24.00px;height:24.00px;background:#e51326;border-radius:6px"></div>
<div style="position:absolute;left:1522.86px;top:948.00px;width:24.00px;height:24.00px;background:#e51326;border-radius:6px"></div>
<svg style="position:absolute;left:1521.86px;top:983.00px;" width="26" height="26" viewBox="1737.86 1019 26 26"><circle cx="1750.86" cy="1032" r="11" fill="none" stroke="#161616" stroke-width="2.2"/><line x1="1758.6599999999999" y1="1024.2" x2="1743.06" y2="1039.8" stroke="#161616" stroke-width="2.2"/></svg>
<div style="position:absolute;left:1522.86px;top:1020.00px;width:24.00px;height:24.00px;background:#e51326;border-radius:6px"></div>
<svg style="position:absolute;left:1572.68px;top:947.00px;" width="26" height="26" viewBox="1788.68 983 26 26"><circle cx="1801.68" cy="996" r="11" fill="none" stroke="#161616" stroke-width="2.2"/><line x1="1809.48" y1="988.2" x2="1793.88" y2="1003.8" stroke="#161616" stroke-width="2.2"/></svg>
<div style="position:absolute;left:1573.68px;top:984.00px;width:24.00px;height:24.00px;background:#e51326;border-radius:6px"></div>
<svg style="position:absolute;left:1621.50px;top:945.00px;" width="30" height="30" viewBox="1837.5 981 30 30"><rect x="1843.5" y="987" width="18" height="18" rx="3.5" transform="rotate(45 1852.5 996)" fill="none" stroke="#161616" stroke-width="2.2"/><line x1="1847.0" y1="996" x2="1858.0" y2="996" stroke="#161616" stroke-width="2.4"/></svg>
<div style="position:absolute;left:1624.50px;top:984.00px;width:24.00px;height:24.00px;background:#8d8d8d;border-radius:6px"></div>
<svg style="position:absolute;left:1621.50px;top:1017.00px;" width="30" height="30" viewBox="1837.5 1053 30 30"><rect x="1843.5" y="1059" width="18" height="18" rx="3.5" transform="rotate(45 1852.5 1068)" fill="none" stroke="#161616" stroke-width="2.2"/><line x1="1847.0" y1="1068" x2="1858.0" y2="1068" stroke="#161616" stroke-width="2.4"/></svg>
<svg style="position:absolute;left:1623.50px;top:1055.00px;" width="26" height="26" viewBox="1839.5 1091 26 26"><circle cx="1852.5" cy="1104" r="11" fill="none" stroke="#161616" stroke-width="2.2"/><line x1="1860.3" y1="1096.2" x2="1844.7" y2="1111.8" stroke="#161616" stroke-width="2.2"/></svg>
<div style="position:absolute;left:1675.32px;top:948.00px;width:24.00px;height:24.00px;background:#e51326;border-radius:6px"></div>
<div style="position:absolute;left:1675.32px;top:984.00px;width:24.00px;height:24.00px;background:#e51326;border-radius:6px"></div>
<div style="position:absolute;left:1675.32px;top:1020.00px;width:24.00px;height:24.00px;background:#17a086;border-radius:6px"></div>
<div style="position:absolute;left:1726.14px;top:948.00px;width:24.00px;height:24.00px;background:#e51326;border-radius:6px"></div>
<svg style="position:absolute;left:1723.14px;top:981.00px;" width="30" height="30" viewBox="1939.14 1017 30 30"><rect x="1945.14" y="1023" width="18" height="18" rx="3.5" transform="rotate(45 1954.14 1032)" fill="none" stroke="#161616" stroke-width="2.2"/><line x1="1948.64" y1="1032" x2="1959.64" y2="1032" stroke="#161616" stroke-width="2.4"/></svg>
<div style="position:absolute;left:1726.14px;top:1020.00px;width:24.00px;height:24.00px;background:#e51326;border-radius:6px"></div>
<div style="position:absolute;left:1726.14px;top:1056.00px;width:24.00px;height:24.00px;background:#e51326;border-radius:6px"></div>
<div style="position:absolute;left:1776.96px;top:948.00px;width:24.00px;height:24.00px;background:#e51326;border-radius:6px"></div>
<div style="position:absolute;left:1776.96px;top:984.00px;width:24.00px;height:24.00px;background:#e51326;border-radius:6px"></div>
<div style="position:absolute;left:1776.96px;top:1020.00px;width:24.00px;height:24.00px;background:#17a086;border-radius:6px"></div>
<div style="position:absolute;left:1827.78px;top:948.00px;width:24.00px;height:24.00px;background:#ee7203;border-radius:6px"></div>
<div style="position:absolute;left:1878.60px;top:948.00px;width:24.00px;height:24.00px;background:#e51326;border-radius:6px"></div>
<svg style="position:absolute;left:1893.60px;top:939.00px;" width="18" height="18" viewBox="2109.6 975 18 18"><circle cx="2118.6" cy="984" r="6.9" fill="#3851a6" stroke="#fdfdfd" stroke-width="2.1"/></svg>
<div style="position:absolute;left:1878.60px;top:984.00px;width:24.00px;height:24.00px;background:#e51326;border-radius:6px"></div>
<div style="position:absolute;left:1929.42px;top:948.00px;width:24.00px;height:24.00px;background:#8d8d8d;border-radius:6px"></div>
<div style="position:absolute;left:1929.42px;top:984.00px;width:24.00px;height:24.00px;background:#e51326;border-radius:6px"></div>
<svg style="position:absolute;left:1928.42px;top:1019.00px;" width="26" height="26" viewBox="2144.42 1055 26 26"><circle cx="2157.42" cy="1068" r="11" fill="none" stroke="#161616" stroke-width="2.2"/><line x1="2165.2200000000003" y1="1060.2" x2="2149.62" y2="1075.8" stroke="#161616" stroke-width="2.2"/></svg>
<div style="position:absolute;left:1980.24px;top:948.00px;width:24.00px;height:24.00px;background:#17a086;border-radius:6px"></div>
<div style="position:absolute;left:1980.24px;top:984.00px;width:24.00px;height:24.00px;background:#e51326;border-radius:6px"></div>
<div style="position:absolute;left:1980.24px;top:1020.00px;width:24.00px;height:24.00px;background:#e51326;border-radius:6px"></div>
<div style="position:absolute;left:1980.24px;top:1056.00px;width:24.00px;height:24.00px;background:#e51326;border-radius:6px"></div>
<div style="position:absolute;left:2031.06px;top:948.00px;width:24.00px;height:24.00px;background:#e51326;border-radius:6px"></div>
<svg style="position:absolute;left:2080.88px;top:947.00px;" width="26" height="26" viewBox="2296.88 983 26 26"><circle cx="2309.88" cy="996" r="11" fill="none" stroke="#161616" stroke-width="2.2"/><line x1="2317.6800000000003" y1="988.2" x2="2302.08" y2="1003.8" stroke="#161616" stroke-width="2.2"/></svg>
<div style="position:absolute;left:108.00px;top:1108.20px;width:2033.00px;height:2.00px;background:#e3e3e3"></div>
<div style="position:absolute;left:658.92px;top:1140.00px;width:24.00px;height:24.00px;background:#17a086;border-radius:6px"></div>
<div style="position:absolute;left:658.92px;top:1176.00px;width:24.00px;height:24.00px;background:#17a086;border-radius:6px"></div>
<div style="position:absolute;left:658.92px;top:1212.00px;width:24.00px;height:24.00px;background:#17a086;border-radius:6px"></div>
<div style="position:absolute;left:709.74px;top:1140.00px;width:24.00px;height:24.00px;background:#17a086;border-radius:6px"></div>
<div style="position:absolute;left:709.74px;top:1176.00px;width:24.00px;height:24.00px;background:#ee7203;border-radius:6px"></div>
<div style="position:absolute;left:709.74px;top:1212.00px;width:24.00px;height:24.00px;background:#17a086;border-radius:6px"></div>
<div style="position:absolute;left:760.56px;top:1140.00px;width:24.00px;height:24.00px;background:#17a086;border-radius:6px"></div>
<div style="position:absolute;left:760.56px;top:1176.00px;width:24.00px;height:24.00px;background:#17a086;border-radius:6px"></div>
<div style="position:absolute;left:760.56px;top:1212.00px;width:24.00px;height:24.00px;background:#17a086;border-radius:6px"></div>
<div style="position:absolute;left:811.38px;top:1140.00px;width:24.00px;height:24.00px;background:#17a086;border-radius:6px"></div>
<div style="position:absolute;left:811.38px;top:1176.00px;width:24.00px;height:24.00px;background:#17a086;border-radius:6px"></div>
<div style="position:absolute;left:811.38px;top:1212.00px;width:24.00px;height:24.00px;background:#ee7203;border-radius:6px"></div>
<div style="position:absolute;left:862.20px;top:1140.00px;width:24.00px;height:24.00px;background:#17a086;border-radius:6px"></div>
<div style="position:absolute;left:862.20px;top:1176.00px;width:24.00px;height:24.00px;background:#17a086;border-radius:6px"></div>
<div style="position:absolute;left:913.02px;top:1140.00px;width:24.00px;height:24.00px;background:#e51326;border-radius:6px"></div>
<div style="position:absolute;left:913.02px;top:1176.00px;width:24.00px;height:24.00px;background:#17a086;border-radius:6px"></div>
<div style="position:absolute;left:913.02px;top:1212.00px;width:24.00px;height:24.00px;background:#17a086;border-radius:6px"></div>
<div style="position:absolute;left:963.84px;top:1140.00px;width:24.00px;height:24.00px;background:#17a086;border-radius:6px"></div>
<svg style="position:absolute;left:960.84px;top:1173.00px;" width="30" height="30" viewBox="1176.8400000000001 1209 30 30"><rect x="1182.8400000000001" y="1215" width="18" height="18" rx="3.5" transform="rotate(45 1191.8400000000001 1224)" fill="none" stroke="#161616" stroke-width="2.2"/><line x1="1186.3400000000001" y1="1224" x2="1197.3400000000001" y2="1224" stroke="#161616" stroke-width="2.4"/></svg>
<div style="position:absolute;left:1014.66px;top:1140.00px;width:24.00px;height:24.00px;background:#17a086;border-radius:6px"></div>
<svg style="position:absolute;left:1013.66px;top:1175.00px;" width="26" height="26" viewBox="1229.6599999999999 1211 26 26"><circle cx="1242.6599999999999" cy="1224" r="11" fill="none" stroke="#161616" stroke-width="2.2"/><line x1="1250.4599999999998" y1="1216.2" x2="1234.86" y2="1231.8" stroke="#161616" stroke-width="2.2"/></svg>
<div style="position:absolute;left:1014.66px;top:1212.00px;width:24.00px;height:24.00px;background:#e51326;border-radius:6px"></div>
<div style="position:absolute;left:1065.48px;top:1140.00px;width:24.00px;height:24.00px;background:#ee7203;border-radius:6px"></div>
<svg style="position:absolute;left:1080.48px;top:1131.00px;" width="18" height="18" viewBox="1296.48 1167 18 18"><circle cx="1305.48" cy="1176" r="6.9" fill="#3851a6" stroke="#fdfdfd" stroke-width="2.1"/></svg>
<div style="position:absolute;left:1065.48px;top:1176.00px;width:24.00px;height:24.00px;background:#17a086;border-radius:6px"></div>
<div style="position:absolute;left:1116.30px;top:1140.00px;width:24.00px;height:24.00px;background:#17a086;border-radius:6px"></div>
<div style="position:absolute;left:1116.30px;top:1176.00px;width:24.00px;height:24.00px;background:#17a086;border-radius:6px"></div>
<div style="position:absolute;left:1116.30px;top:1212.00px;width:24.00px;height:24.00px;background:#17a086;border-radius:6px"></div>
<div style="position:absolute;left:1116.30px;top:1248.00px;width:24.00px;height:24.00px;background:#17a086;border-radius:6px"></div>
<div style="position:absolute;left:1167.12px;top:1140.00px;width:24.00px;height:24.00px;background:#17a086;border-radius:6px"></div>
<div style="position:absolute;left:1167.12px;top:1176.00px;width:24.00px;height:24.00px;background:#17a086;border-radius:6px"></div>
<div style="position:absolute;left:1167.12px;top:1212.00px;width:24.00px;height:24.00px;background:#8d8d8d;border-radius:6px"></div>
<div style="position:absolute;left:1167.12px;top:1248.00px;width:24.00px;height:24.00px;background:#ee7203;border-radius:6px"></div>
<div style="position:absolute;left:1217.94px;top:1140.00px;width:24.00px;height:24.00px;background:#17a086;border-radius:6px"></div>
<div style="position:absolute;left:1217.94px;top:1176.00px;width:24.00px;height:24.00px;background:#e51326;border-radius:6px"></div>
<div style="position:absolute;left:1217.94px;top:1212.00px;width:24.00px;height:24.00px;background:#17a086;border-radius:6px"></div>
<div style="position:absolute;left:1268.76px;top:1140.00px;width:24.00px;height:24.00px;background:#17a086;border-radius:6px"></div>
<div style="position:absolute;left:1268.76px;top:1176.00px;width:24.00px;height:24.00px;background:#8d8d8d;border-radius:6px"></div>
<div style="position:absolute;left:1268.76px;top:1212.00px;width:24.00px;height:24.00px;background:#ee7203;border-radius:6px"></div>
<div style="position:absolute;left:1319.58px;top:1140.00px;width:24.00px;height:24.00px;background:#17a086;border-radius:6px"></div>
<div style="position:absolute;left:1319.58px;top:1176.00px;width:24.00px;height:24.00px;background:#8d8d8d;border-radius:6px"></div>
<div style="position:absolute;left:1319.58px;top:1212.00px;width:24.00px;height:24.00px;background:#17a086;border-radius:6px"></div>
<div style="position:absolute;left:1370.40px;top:1140.00px;width:24.00px;height:24.00px;background:#17a086;border-radius:6px"></div>
<div style="position:absolute;left:1370.40px;top:1176.00px;width:24.00px;height:24.00px;background:#17a086;border-radius:6px"></div>
<div style="position:absolute;left:1370.40px;top:1212.00px;width:24.00px;height:24.00px;background:#8d8d8d;border-radius:6px"></div>
<div style="position:absolute;left:1370.40px;top:1248.00px;width:24.00px;height:24.00px;background:#17a086;border-radius:6px"></div>
<div style="position:absolute;left:1421.22px;top:1140.00px;width:24.00px;height:24.00px;background:#17a086;border-radius:6px"></div>
<div style="position:absolute;left:1472.04px;top:1140.00px;width:24.00px;height:24.00px;background:#17a086;border-radius:6px"></div>
<div style="position:absolute;left:1472.04px;top:1176.00px;width:24.00px;height:24.00px;background:#e51326;border-radius:6px"></div>
<div style="position:absolute;left:1472.04px;top:1212.00px;width:24.00px;height:24.00px;background:#17a086;border-radius:6px"></div>
<div style="position:absolute;left:1472.04px;top:1248.00px;width:24.00px;height:24.00px;background:#e51326;border-radius:6px"></div>
<div style="position:absolute;left:1522.86px;top:1140.00px;width:24.00px;height:24.00px;background:#ee7203;border-radius:6px"></div>
<div style="position:absolute;left:1522.86px;top:1176.00px;width:24.00px;height:24.00px;background:#17a086;border-radius:6px"></div>
<div style="position:absolute;left:1522.86px;top:1212.00px;width:24.00px;height:24.00px;background:#e51326;border-radius:6px"></div>
<div style="position:absolute;left:1573.68px;top:1140.00px;width:24.00px;height:24.00px;background:#e51326;border-radius:6px"></div>
<div style="position:absolute;left:1573.68px;top:1176.00px;width:24.00px;height:24.00px;background:#17a086;border-radius:6px"></div>
<div style="position:absolute;left:1573.68px;top:1212.00px;width:24.00px;height:24.00px;background:#17a086;border-radius:6px"></div>
<div style="position:absolute;left:1624.50px;top:1140.00px;width:24.00px;height:24.00px;background:#17a086;border-radius:6px"></div>
<div style="position:absolute;left:1675.32px;top:1140.00px;width:24.00px;height:24.00px;background:#8d8d8d;border-radius:6px"></div>
<div style="position:absolute;left:1675.32px;top:1176.00px;width:24.00px;height:24.00px;background:#17a086;border-radius:6px"></div>
<div style="position:absolute;left:1675.32px;top:1212.00px;width:24.00px;height:24.00px;background:#17a086;border-radius:6px"></div>
<div style="position:absolute;left:1675.32px;top:1248.00px;width:24.00px;height:24.00px;background:#17a086;border-radius:6px"></div>
<div style="position:absolute;left:1726.14px;top:1140.00px;width:24.00px;height:24.00px;background:#17a086;border-radius:6px"></div>
<div style="position:absolute;left:1726.14px;top:1176.00px;width:24.00px;height:24.00px;background:#17a086;border-radius:6px"></div>
<div style="position:absolute;left:1726.14px;top:1212.00px;width:24.00px;height:24.00px;background:#17a086;border-radius:6px"></div>
<div style="position:absolute;left:1726.14px;top:1248.00px;width:24.00px;height:24.00px;background:#8d8d8d;border-radius:6px"></div>
<div style="position:absolute;left:1776.96px;top:1140.00px;width:24.00px;height:24.00px;background:#17a086;border-radius:6px"></div>
<div style="position:absolute;left:1776.96px;top:1176.00px;width:24.00px;height:24.00px;background:#8d8d8d;border-radius:6px"></div>
<div style="position:absolute;left:1776.96px;top:1212.00px;width:24.00px;height:24.00px;background:#17a086;border-radius:6px"></div>
<div style="position:absolute;left:1827.78px;top:1140.00px;width:24.00px;height:24.00px;background:#17a086;border-radius:6px"></div>
<div style="position:absolute;left:1827.78px;top:1176.00px;width:24.00px;height:24.00px;background:#17a086;border-radius:6px"></div>
<div style="position:absolute;left:1827.78px;top:1212.00px;width:24.00px;height:24.00px;background:#17a086;border-radius:6px"></div>
<div style="position:absolute;left:108.00px;top:1300.20px;width:2033.00px;height:2.00px;background:#e3e3e3"></div>
<div style="position:absolute;left:658.92px;top:1332.00px;width:24.00px;height:24.00px;background:#e51326;border-radius:6px"></div>
<div style="position:absolute;left:658.92px;top:1368.00px;width:24.00px;height:24.00px;background:#ee7203;border-radius:6px"></div>
<div style="position:absolute;left:658.92px;top:1404.00px;width:24.00px;height:24.00px;background:#17a086;border-radius:6px"></div>
<div style="position:absolute;left:709.74px;top:1332.00px;width:24.00px;height:24.00px;background:#e51326;border-radius:6px"></div>
<div style="position:absolute;left:709.74px;top:1368.00px;width:24.00px;height:24.00px;background:#17a086;border-radius:6px"></div>
<div style="position:absolute;left:709.74px;top:1404.00px;width:24.00px;height:24.00px;background:#17a086;border-radius:6px"></div>
<div style="position:absolute;left:760.56px;top:1332.00px;width:24.00px;height:24.00px;background:#ee7203;border-radius:6px"></div>
<div style="position:absolute;left:760.56px;top:1368.00px;width:24.00px;height:24.00px;background:#e51326;border-radius:6px"></div>
<div style="position:absolute;left:760.56px;top:1404.00px;width:24.00px;height:24.00px;background:#17a086;border-radius:6px"></div>
<div style="position:absolute;left:811.38px;top:1332.00px;width:24.00px;height:24.00px;background:#17a086;border-radius:6px"></div>
<div style="position:absolute;left:811.38px;top:1368.00px;width:24.00px;height:24.00px;background:#17a086;border-radius:6px"></div>
<div style="position:absolute;left:811.38px;top:1404.00px;width:24.00px;height:24.00px;background:#17a086;border-radius:6px"></div>
<div style="position:absolute;left:862.20px;top:1332.00px;width:24.00px;height:24.00px;background:#17a086;border-radius:6px"></div>
<div style="position:absolute;left:862.20px;top:1368.00px;width:24.00px;height:24.00px;background:#17a086;border-radius:6px"></div>
<div style="position:absolute;left:913.02px;top:1332.00px;width:24.00px;height:24.00px;background:#17a086;border-radius:6px"></div>
<div style="position:absolute;left:913.02px;top:1368.00px;width:24.00px;height:24.00px;background:#17a086;border-radius:6px"></div>
<div style="position:absolute;left:913.02px;top:1404.00px;width:24.00px;height:24.00px;background:#ee7203;border-radius:6px"></div>
<div style="position:absolute;left:963.84px;top:1332.00px;width:24.00px;height:24.00px;background:#8d8d8d;border-radius:6px"></div>
<div style="position:absolute;left:963.84px;top:1368.00px;width:24.00px;height:24.00px;background:#8d8d8d;border-radius:6px"></div>
<div style="position:absolute;left:1014.66px;top:1332.00px;width:24.00px;height:24.00px;background:#17a086;border-radius:6px"></div>
<div style="position:absolute;left:1014.66px;top:1368.00px;width:24.00px;height:24.00px;background:#17a086;border-radius:6px"></div>
<div style="position:absolute;left:1014.66px;top:1404.00px;width:24.00px;height:24.00px;background:#17a086;border-radius:6px"></div>
<div style="position:absolute;left:1065.48px;top:1332.00px;width:24.00px;height:24.00px;background:#17a086;border-radius:6px"></div>
<div style="position:absolute;left:1065.48px;top:1368.00px;width:24.00px;height:24.00px;background:#17a086;border-radius:6px"></div>
<svg style="position:absolute;left:1115.30px;top:1331.00px;" width="26" height="26" viewBox="1331.3 1367 26 26"><circle cx="1344.3" cy="1380" r="11" fill="none" stroke="#161616" stroke-width="2.2"/><line x1="1352.1" y1="1372.2" x2="1336.5" y2="1387.8" stroke="#161616" stroke-width="2.2"/></svg>
<div style="position:absolute;left:1116.30px;top:1368.00px;width:24.00px;height:24.00px;background:#e51326;border-radius:6px"></div>
<div style="position:absolute;left:1116.30px;top:1404.00px;width:24.00px;height:24.00px;background:#17a086;border-radius:6px"></div>
<div style="position:absolute;left:1116.30px;top:1440.00px;width:24.00px;height:24.00px;background:#e51326;border-radius:6px"></div>
<div style="position:absolute;left:1167.12px;top:1332.00px;width:24.00px;height:24.00px;background:#17a086;border-radius:6px"></div>
<div style="position:absolute;left:1167.12px;top:1368.00px;width:24.00px;height:24.00px;background:#e51326;border-radius:6px"></div>
<div style="position:absolute;left:1167.12px;top:1404.00px;width:24.00px;height:24.00px;background:#17a086;border-radius:6px"></div>
<svg style="position:absolute;left:1164.12px;top:1437.00px;" width="30" height="30" viewBox="1380.12 1473 30 30"><rect x="1386.12" y="1479" width="18" height="18" rx="3.5" transform="rotate(45 1395.12 1488)" fill="none" stroke="#161616" stroke-width="2.2"/><line x1="1389.62" y1="1488" x2="1400.62" y2="1488" stroke="#161616" stroke-width="2.4"/></svg>
<div style="position:absolute;left:1217.94px;top:1332.00px;width:24.00px;height:24.00px;background:#17a086;border-radius:6px"></div>
<div style="position:absolute;left:1217.94px;top:1368.00px;width:24.00px;height:24.00px;background:#17a086;border-radius:6px"></div>
<div style="position:absolute;left:1217.94px;top:1404.00px;width:24.00px;height:24.00px;background:#e51326;border-radius:6px"></div>
<div style="position:absolute;left:1268.76px;top:1332.00px;width:24.00px;height:24.00px;background:#17a086;border-radius:6px"></div>
<div style="position:absolute;left:1268.76px;top:1368.00px;width:24.00px;height:24.00px;background:#17a086;border-radius:6px"></div>
<div style="position:absolute;left:1268.76px;top:1404.00px;width:24.00px;height:24.00px;background:#8d8d8d;border-radius:6px"></div>
<div style="position:absolute;left:1319.58px;top:1332.00px;width:24.00px;height:24.00px;background:#17a086;border-radius:6px"></div>
<div style="position:absolute;left:1319.58px;top:1368.00px;width:24.00px;height:24.00px;background:#17a086;border-radius:6px"></div>
<div style="position:absolute;left:1319.58px;top:1404.00px;width:24.00px;height:24.00px;background:#e51326;border-radius:6px"></div>
<div style="position:absolute;left:1370.40px;top:1332.00px;width:24.00px;height:24.00px;background:#17a086;border-radius:6px"></div>
<div style="position:absolute;left:1370.40px;top:1368.00px;width:24.00px;height:24.00px;background:#17a086;border-radius:6px"></div>
<div style="position:absolute;left:1370.40px;top:1404.00px;width:24.00px;height:24.00px;background:#17a086;border-radius:6px"></div>
<div style="position:absolute;left:1370.40px;top:1440.00px;width:24.00px;height:24.00px;background:#17a086;border-radius:6px"></div>
<div style="position:absolute;left:1421.22px;top:1332.00px;width:24.00px;height:24.00px;background:#17a086;border-radius:6px"></div>
<div style="position:absolute;left:1472.04px;top:1332.00px;width:24.00px;height:24.00px;background:#8d8d8d;border-radius:6px"></div>
<div style="position:absolute;left:1472.04px;top:1368.00px;width:24.00px;height:24.00px;background:#17a086;border-radius:6px"></div>
<div style="position:absolute;left:1472.04px;top:1404.00px;width:24.00px;height:24.00px;background:#17a086;border-radius:6px"></div>
<div style="position:absolute;left:1472.04px;top:1440.00px;width:24.00px;height:24.00px;background:#17a086;border-radius:6px"></div>
<div style="position:absolute;left:1522.86px;top:1332.00px;width:24.00px;height:24.00px;background:#17a086;border-radius:6px"></div>
<div style="position:absolute;left:1522.86px;top:1368.00px;width:24.00px;height:24.00px;background:#ee7203;border-radius:6px"></div>
<div style="position:absolute;left:1522.86px;top:1404.00px;width:24.00px;height:24.00px;background:#17a086;border-radius:6px"></div>
<div style="position:absolute;left:1573.68px;top:1332.00px;width:24.00px;height:24.00px;background:#17a086;border-radius:6px"></div>
<div style="position:absolute;left:1573.68px;top:1368.00px;width:24.00px;height:24.00px;background:#17a086;border-radius:6px"></div>
<div style="position:absolute;left:1573.68px;top:1404.00px;width:24.00px;height:24.00px;background:#17a086;border-radius:6px"></div>
<div style="position:absolute;left:1624.50px;top:1332.00px;width:24.00px;height:24.00px;background:#17a086;border-radius:6px"></div>
<div style="position:absolute;left:1675.32px;top:1332.00px;width:24.00px;height:24.00px;background:#17a086;border-radius:6px"></div>
<div style="position:absolute;left:1675.32px;top:1368.00px;width:24.00px;height:24.00px;background:#17a086;border-radius:6px"></div>
<div style="position:absolute;left:1675.32px;top:1404.00px;width:24.00px;height:24.00px;background:#17a086;border-radius:6px"></div>
<div style="position:absolute;left:1675.32px;top:1440.00px;width:24.00px;height:24.00px;background:#17a086;border-radius:6px"></div>
<div style="position:absolute;left:1726.14px;top:1332.00px;width:24.00px;height:24.00px;background:#17a086;border-radius:6px"></div>
<div style="position:absolute;left:1726.14px;top:1368.00px;width:24.00px;height:24.00px;background:#17a086;border-radius:6px"></div>
<div style="position:absolute;left:1726.14px;top:1404.00px;width:24.00px;height:24.00px;background:#e51326;border-radius:6px"></div>
<div style="position:absolute;left:1726.14px;top:1440.00px;width:24.00px;height:24.00px;background:#17a086;border-radius:6px"></div>
<div style="position:absolute;left:1776.96px;top:1332.00px;width:24.00px;height:24.00px;background:#17a086;border-radius:6px"></div>
<div style="position:absolute;left:1776.96px;top:1368.00px;width:24.00px;height:24.00px;background:#17a086;border-radius:6px"></div>
<div style="position:absolute;left:1776.96px;top:1404.00px;width:24.00px;height:24.00px;background:#8d8d8d;border-radius:6px"></div>
<div style="position:absolute;left:1827.78px;top:1332.00px;width:24.00px;height:24.00px;background:#ee7203;border-radius:6px"></div>
<svg style="position:absolute;left:1824.78px;top:1365.00px;" width="30" height="30" viewBox="2040.78 1401 30 30"><rect x="2046.7799999999997" y="1407" width="18" height="18" rx="3.5" transform="rotate(45 2055.7799999999997 1416)" fill="none" stroke="#161616" stroke-width="2.2"/><line x1="2050.2799999999997" y1="1416" x2="2061.2799999999997" y2="1416" stroke="#161616" stroke-width="2.4"/></svg>
<div style="position:absolute;left:1827.78px;top:1404.00px;width:24.00px;height:24.00px;background:#17a086;border-radius:6px"></div>
<div style="position:absolute;left:108.00px;top:1492.20px;width:2033.00px;height:2.00px;background:#e3e3e3"></div>
<div style="position:absolute;left:354.00px;top:1524.00px;width:24.00px;height:24.00px;background:#17a086;border-radius:6px"></div>
<svg style="position:absolute;left:353.00px;top:1559.00px;" width="26" height="26" viewBox="569.0 1595 26 26"><circle cx="582.0" cy="1608" r="11" fill="none" stroke="#161616" stroke-width="2.2"/><line x1="589.8" y1="1600.2" x2="574.2" y2="1615.8" stroke="#161616" stroke-width="2.2"/></svg>
<div style="position:absolute;left:404.82px;top:1524.00px;width:24.00px;height:24.00px;background:#17a086;border-radius:6px"></div>
<div style="position:absolute;left:404.82px;top:1560.00px;width:24.00px;height:24.00px;background:#17a086;border-radius:6px"></div>
<div style="position:absolute;left:455.64px;top:1524.00px;width:24.00px;height:24.00px;background:#ee7203;border-radius:6px"></div>
<div style="position:absolute;left:455.64px;top:1560.00px;width:24.00px;height:24.00px;background:#17a086;border-radius:6px"></div>
<div style="position:absolute;left:506.46px;top:1524.00px;width:24.00px;height:24.00px;background:#ee7203;border-radius:6px"></div>
<div style="position:absolute;left:506.46px;top:1560.00px;width:24.00px;height:24.00px;background:#17a086;border-radius:6px"></div>
<div style="position:absolute;left:557.28px;top:1524.00px;width:24.00px;height:24.00px;background:#17a086;border-radius:6px"></div>
<div style="position:absolute;left:557.28px;top:1560.00px;width:24.00px;height:24.00px;background:#17a086;border-radius:6px"></div>
<div style="position:absolute;left:608.10px;top:1524.00px;width:24.00px;height:24.00px;background:#17a086;border-radius:6px"></div>
<div style="position:absolute;left:608.10px;top:1560.00px;width:24.00px;height:24.00px;background:#17a086;border-radius:6px"></div>
<div style="position:absolute;left:658.92px;top:1524.00px;width:24.00px;height:24.00px;background:#8d8d8d;border-radius:6px"></div>
<div style="position:absolute;left:658.92px;top:1560.00px;width:24.00px;height:24.00px;background:#17a086;border-radius:6px"></div>
<div style="position:absolute;left:709.74px;top:1524.00px;width:24.00px;height:24.00px;background:#e51326;border-radius:6px"></div>
<div style="position:absolute;left:760.56px;top:1524.00px;width:24.00px;height:24.00px;background:#17a086;border-radius:6px"></div>
<div style="position:absolute;left:760.56px;top:1560.00px;width:24.00px;height:24.00px;background:#ee7203;border-radius:6px"></div>
<div style="position:absolute;left:811.38px;top:1524.00px;width:24.00px;height:24.00px;background:#17a086;border-radius:6px"></div>
<div style="position:absolute;left:811.38px;top:1560.00px;width:24.00px;height:24.00px;background:#ee7203;border-radius:6px"></div>
<div style="position:absolute;left:862.20px;top:1524.00px;width:24.00px;height:24.00px;background:#17a086;border-radius:6px"></div>
<div style="position:absolute;left:862.20px;top:1560.00px;width:24.00px;height:24.00px;background:#17a086;border-radius:6px"></div>
<div style="position:absolute;left:913.02px;top:1524.00px;width:24.00px;height:24.00px;background:#17a086;border-radius:6px"></div>
<div style="position:absolute;left:913.02px;top:1560.00px;width:24.00px;height:24.00px;background:#17a086;border-radius:6px"></div>
<div style="position:absolute;left:963.84px;top:1524.00px;width:24.00px;height:24.00px;background:#17a086;border-radius:6px"></div>
<div style="position:absolute;left:963.84px;top:1560.00px;width:24.00px;height:24.00px;background:#17a086;border-radius:6px"></div>
<div style="position:absolute;left:1014.66px;top:1524.00px;width:24.00px;height:24.00px;background:#17a086;border-radius:6px"></div>
<div style="position:absolute;left:1014.66px;top:1560.00px;width:24.00px;height:24.00px;background:#17a086;border-radius:6px"></div>
<div style="position:absolute;left:1065.48px;top:1524.00px;width:24.00px;height:24.00px;background:#17a086;border-radius:6px"></div>
<div style="position:absolute;left:1065.48px;top:1560.00px;width:24.00px;height:24.00px;background:#17a086;border-radius:6px"></div>
<div style="position:absolute;left:1116.30px;top:1524.00px;width:24.00px;height:24.00px;background:#17a086;border-radius:6px"></div>
<div style="position:absolute;left:1116.30px;top:1560.00px;width:24.00px;height:24.00px;background:#8d8d8d;border-radius:6px"></div>
<div style="position:absolute;left:1167.12px;top:1524.00px;width:24.00px;height:24.00px;background:#8d8d8d;border-radius:6px"></div>
<div style="position:absolute;left:1167.12px;top:1560.00px;width:24.00px;height:24.00px;background:#17a086;border-radius:6px"></div>
<svg style="position:absolute;left:1216.94px;top:1523.00px;" width="26" height="26" viewBox="1432.94 1559 26 26"><circle cx="1445.94" cy="1572" r="11" fill="none" stroke="#161616" stroke-width="2.2"/><line x1="1453.74" y1="1564.2" x2="1438.14" y2="1579.8" stroke="#161616" stroke-width="2.2"/></svg>
<div style="position:absolute;left:1217.94px;top:1560.00px;width:24.00px;height:24.00px;background:#17a086;border-radius:6px"></div>
<div style="position:absolute;left:1268.76px;top:1524.00px;width:24.00px;height:24.00px;background:#17a086;border-radius:6px"></div>
<svg style="position:absolute;left:1267.76px;top:1559.00px;" width="26" height="26" viewBox="1483.76 1595 26 26"><circle cx="1496.76" cy="1608" r="11" fill="none" stroke="#161616" stroke-width="2.2"/><line x1="1504.56" y1="1600.2" x2="1488.96" y2="1615.8" stroke="#161616" stroke-width="2.2"/></svg>
<div style="position:absolute;left:1319.58px;top:1524.00px;width:24.00px;height:24.00px;background:#17a086;border-radius:6px"></div>
<svg style="position:absolute;left:1318.58px;top:1559.00px;" width="26" height="26" viewBox="1534.58 1595 26 26"><circle cx="1547.58" cy="1608" r="11" fill="none" stroke="#161616" stroke-width="2.2"/><line x1="1555.3799999999999" y1="1600.2" x2="1539.78" y2="1615.8" stroke="#161616" stroke-width="2.2"/></svg>
<div style="position:absolute;left:1370.40px;top:1524.00px;width:24.00px;height:24.00px;background:#17a086;border-radius:6px"></div>
<div style="position:absolute;left:1370.40px;top:1560.00px;width:24.00px;height:24.00px;background:#17a086;border-radius:6px"></div>
<div style="position:absolute;left:1421.22px;top:1524.00px;width:24.00px;height:24.00px;background:#e51326;border-radius:6px"></div>
<div style="position:absolute;left:1421.22px;top:1560.00px;width:24.00px;height:24.00px;background:#17a086;border-radius:6px"></div>
<div style="position:absolute;left:1472.04px;top:1524.00px;width:24.00px;height:24.00px;background:#17a086;border-radius:6px"></div>
<div style="position:absolute;left:1472.04px;top:1560.00px;width:24.00px;height:24.00px;background:#17a086;border-radius:6px"></div>
<div style="position:absolute;left:1522.86px;top:1524.00px;width:24.00px;height:24.00px;background:#17a086;border-radius:6px"></div>
<div style="position:absolute;left:1522.86px;top:1560.00px;width:24.00px;height:24.00px;background:#17a086;border-radius:6px"></div>
<div style="position:absolute;left:1573.68px;top:1524.00px;width:24.00px;height:24.00px;background:#17a086;border-radius:6px"></div>
<div style="position:absolute;left:1573.68px;top:1560.00px;width:24.00px;height:24.00px;background:#17a086;border-radius:6px"></div>
<div style="position:absolute;left:1624.50px;top:1524.00px;width:24.00px;height:24.00px;background:#17a086;border-radius:6px"></div>
<div style="position:absolute;left:1624.50px;top:1560.00px;width:24.00px;height:24.00px;background:#ee7203;border-radius:6px"></div>
<div style="position:absolute;left:1675.32px;top:1524.00px;width:24.00px;height:24.00px;background:#e51326;border-radius:6px"></div>
<div style="position:absolute;left:1675.32px;top:1560.00px;width:24.00px;height:24.00px;background:#e51326;border-radius:6px"></div>
<div style="position:absolute;left:1726.14px;top:1524.00px;width:24.00px;height:24.00px;background:#17a086;border-radius:6px"></div>
<div style="position:absolute;left:1726.14px;top:1560.00px;width:24.00px;height:24.00px;background:#17a086;border-radius:6px"></div>
<div style="position:absolute;left:1776.96px;top:1524.00px;width:24.00px;height:24.00px;background:#e51326;border-radius:6px"></div>
<div style="position:absolute;left:1776.96px;top:1560.00px;width:24.00px;height:24.00px;background:#17a086;border-radius:6px"></div>
<div style="position:absolute;left:1827.78px;top:1524.00px;width:24.00px;height:24.00px;background:#17a086;border-radius:6px"></div>
<div style="position:absolute;left:1878.60px;top:1524.00px;width:24.00px;height:24.00px;background:#ee7203;border-radius:6px"></div>
<div style="position:absolute;left:1878.60px;top:1560.00px;width:24.00px;height:24.00px;background:#ee7203;border-radius:6px"></div>
<div style="position:absolute;left:1929.42px;top:1524.00px;width:24.00px;height:24.00px;background:#ee7203;border-radius:6px"></div>
<div style="position:absolute;left:1929.42px;top:1560.00px;width:24.00px;height:24.00px;background:#ee7203;border-radius:6px"></div>
<div style="position:absolute;left:1980.24px;top:1524.00px;width:24.00px;height:24.00px;background:#17a086;border-radius:6px"></div>
<div style="position:absolute;left:1980.24px;top:1560.00px;width:24.00px;height:24.00px;background:#ee7203;border-radius:6px"></div>
<div style="position:absolute;left:2031.06px;top:1524.00px;width:24.00px;height:24.00px;background:#17a086;border-radius:6px"></div>
<div style="position:absolute;left:2081.88px;top:1524.00px;width:24.00px;height:24.00px;background:#17a086;border-radius:6px"></div>
<svg style="position:absolute;left:36.00px;top:48.00px;" width="36" height="36" viewBox="252 84 36 36"><defs><clipPath id="lq1"><rect x="252" y="84" width="17.1" height="17.1"/></clipPath><clipPath id="lq2"><rect x="270.9" y="84" width="17.1" height="17.1"/></clipPath><clipPath id="lq3"><rect x="252" y="102.9" width="17.1" height="17.1"/></clipPath><clipPath id="lq4"><rect x="270.9" y="102.9" width="17.1" height="17.1"/></clipPath><clipPath id="c1"><circle cx="252" cy="84" r="18"/></clipPath><clipPath id="c4"><circle cx="288" cy="120" r="18"/></clipPath></defs><g clip-path="url(#lq1)"><circle cx="270" cy="102" r="18" fill="#c8e7f6" clip-path="url(#c1)"/></g><g clip-path="url(#lq2)"><circle cx="288" cy="84" r="18" fill="#ffffff"/></g><g clip-path="url(#lq3)"><circle cx="252" cy="120" r="18" fill="#c8e7f6"/></g><g clip-path="url(#lq4)"><circle cx="270" cy="102" r="18" fill="#c8e7f6" clip-path="url(#c4)"/></g></svg>
<svg style="position:absolute;left:34.00px;top:142.00px;" width="40" height="40" viewBox="250 178 40 40"><rect x="256.2" y="184.6" width="27.4" height="27.2" rx="4" fill="none" stroke="#ffffff" stroke-width="2"/><g stroke="#ffffff" stroke-width="2" stroke-linecap="round"><line x1="264" y1="197" x2="264" y2="205.5"/><line x1="269.8" y1="190.5" x2="269.8" y2="205.5"/><line x1="275.8" y1="199" x2="275.8" y2="205.5"/></g></svg>
<svg style="position:absolute;left:34.00px;top:224.00px;" width="40" height="42" viewBox="250 260 40 42"><rect x="256.2" y="267" width="27.4" height="27.5" rx="4.5" fill="none" stroke="#ffffff" stroke-width="2"/><rect x="260.8" y="273.6" width="18.2" height="8.6" rx="3" fill="none" stroke="#ffffff" stroke-width="2"/><circle cx="262.6" cy="288.3" r="1.2" fill="#ffffff"/><circle cx="277.4" cy="288.3" r="1.2" fill="#ffffff"/><g stroke="#ffffff" stroke-width="2"><line x1="262.6" y1="294.5" x2="262.6" y2="298"/><line x1="277.4" y1="294.5" x2="277.4" y2="298"/></g></svg>
<svg style="position:absolute;left:34.00px;top:314.00px;" width="40" height="32" viewBox="250 350 40 32"><g fill="#ffffff"><circle cx="256.5" cy="357" r="1.1"/><circle cx="256.5" cy="366" r="1.1"/><circle cx="256.5" cy="375" r="1.1"/></g><g stroke="#ffffff" stroke-width="2"><line x1="263.2" y1="357" x2="284.3" y2="357"/><line x1="263.2" y1="366" x2="284.3" y2="366"/><line x1="263.2" y1="375" x2="284.3" y2="375"/></g></svg>
<div style="position:absolute;left:24.00px;top:384.00px;width:60.00px;height:60.00px;background:#035882;border-radius:7px"></div>
<svg style="position:absolute;left:34.00px;top:394.00px;" width="40" height="40" viewBox="250 430 40 40"><rect x="255.4" y="435.8" width="12.6" height="12.4" rx="3" fill="#ffffff"/><circle cx="278.4" cy="442" r="5.2" fill="none" stroke="#ffffff" stroke-width="1.8"/><rect x="257.3" y="453.7" width="9" height="9" rx="1.8" transform="rotate(45 261.8 458.2)" fill="none" stroke="#ffffff" stroke-width="1.8"/><rect x="273" y="452.8" width="11" height="11" rx="2.5" fill="none" stroke="#ffffff" stroke-width="1.8"/></svg>
<svg style="position:absolute;left:32.00px;top:476.00px;" width="44" height="44" viewBox="248 512 44 44"><path d="M253.3 526 L265 519.4 L276 525.6 L286.5 519.4 L286.5 543 L276 549.2 L265 543 L253.3 549.2 Z M265 519.4 L265 543 M276 525.6 L276 549.2" fill="none" stroke="#ffffff" stroke-width="2" stroke-linejoin="round"/></svg>
<svg style="position:absolute;left:34.00px;top:562.00px;" width="40" height="40" viewBox="250 598 40 40"><path d="M265.5 604.8 L259.5 604.8 Q256.4 604.8 256.4 607.9 L256.4 628.5 Q256.4 631.6 259.5 631.6 L265.5 631.6" fill="none" stroke="#ffffff" stroke-width="2" stroke-linecap="round"/><path d="M264.5 618.2 L284 618.2 M277.5 611.6 L284 618.2 L277.5 624.8" fill="none" stroke="#ffffff" stroke-width="2" stroke-linecap="round" stroke-linejoin="round"/></svg>
<div style="position:absolute;left:24.20px;top:648.20px;width:59.50px;height:59.50px;box-sizing:border-box;border:1.6px solid #4ba2cf;border-radius:9px"></div>
<div style="position:absolute;left:38.90px;top:662.80px;width:30.10px;height:30.20px;background:#fff;border-radius:5.5px"></div>
<svg style="position:absolute;left:42.00px;top:666.00px;" width="24" height="24" viewBox="258 702 24 24"><path d="M269.1 705 A9 9 0 0 0 261 713.1 L269.1 713.1 Z" fill="#1bb394"/><path d="M261 714.9 A9 9 0 0 0 269.1 723 L269.1 714.9 Z" fill="#1bb394"/><path d="M270.9 714.9 A8.1 8.1 0 0 1 279 723 L270.9 723 Z" fill="#1bb394"/><rect x="269.1" y="713.1" width="1.8" height="9.9" fill="#9ddfcb"/><rect x="261" y="713.1" width="8.1" height="1.8" fill="#9ddfcb"/><path d="M279 705 L279 709 A4.5 4.5 0 0 1 274.5 713.4 A3.8 3.8 0 0 1 270.9 709.6 A4.6 4.6 0 0 1 275.5 705 Z" fill="#045943"/></svg>
<svg style="position:absolute;left:34.00px;top:1444.00px;" width="40" height="44" viewBox="250 1480 40 44"><path d="M262.2 1500.3 L262.2 1494.5 A7.3 7.3 0 0 1 276.8 1494.5 L276.8 1500.3" fill="none" stroke="#ffffff" stroke-width="2.2"/><rect x="256.3" y="1501.1" width="27.3" height="17.2" rx="3.6" fill="none" stroke="#ffffff" stroke-width="2.2"/></svg>
<div id="t0" style="position:absolute;left:138.70px;top:36.20px;font-size:24.56px;line-height:1;white-space:nowrap;color:#22759f;font-weight:400;transform:scaleX(1.0808);transform-origin:0 0;">Oxleyshire Transit</div>
<svg style="position:absolute;left:360.00px;top:40.00px;" width="22" height="16" viewBox="576 76 22 16"><path d="M580.3 80.6 L586.6 87 L592.8 80.6" fill="none" stroke="#22759f" stroke-width="2" stroke-linecap="round" stroke-linejoin="round"/></svg>
<div id="t1" style="position:absolute;left:401.00px;top:36.20px;font-size:24.56px;line-height:1;white-space:nowrap;color:#22759f;font-weight:400;transform:scaleX(1.1050);transform-origin:0 0;">Millhaven</div>
<svg style="position:absolute;left:525.00px;top:40.00px;" width="22" height="16" viewBox="741 76 22 16"><path d="M745.8 80.6 L752 87 L758.2 80.6" fill="none" stroke="#22759f" stroke-width="2" stroke-linecap="round" stroke-linejoin="round"/></svg>
<div style="position:absolute;left:565.00px;top:30.00px;width:2.00px;height:34.00px;background:#1d1d1d"></div>
<div id="t2" style="position:absolute;left:584.00px;top:36.20px;font-size:24.56px;line-height:1;white-space:nowrap;color:#1d1d1d;font-weight:400;transform:scaleX(1.0943);transform-origin:0 0;">Journeys</div>
<div style="position:absolute;left:138.30px;top:96.30px;width:65.20px;height:65.20px;box-sizing:border-box;border:2px solid #c8c8c8;border-radius:9px;background:#fff"></div>
<svg style="position:absolute;left:150.00px;top:108.00px;" width="42" height="42" viewBox="366 144 42 42"><rect x="373.7" y="153.2" width="26.7" height="26.3" rx="3.6" fill="none" stroke="#141414" stroke-width="2.1"/><g stroke="#141414" stroke-width="2.1"><line x1="373.7" y1="161.7" x2="400.4" y2="161.7"/><line x1="380.9" y1="149" x2="380.9" y2="156.5"/><line x1="393.1" y1="149" x2="393.1" y2="156.5"/></g></svg>
<div style="position:absolute;left:222.30px;top:96.30px;width:131.40px;height:65.20px;box-sizing:border-box;border:2px solid #c8c8c8;border-radius:9px;background:#fff"></div>
<div style="position:absolute;left:286.40px;top:97.00px;width:1.80px;height:64.00px;background:#c8c8c8"></div>
<svg style="position:absolute;left:244.00px;top:114.00px;" width="22" height="30" viewBox="460 150 22 30"><path d="M476 156 L466.5 165 L476 174" fill="none" stroke="#141414" stroke-width="2.1" stroke-linecap="round" stroke-linejoin="round"/></svg>
<svg style="position:absolute;left:310.00px;top:114.00px;" width="22" height="30" viewBox="526 150 22 30"><path d="M532 156 L541.5 165 L532 174" fill="none" stroke="#141414" stroke-width="2.1" stroke-linecap="round" stroke-linejoin="round"/></svg>
<div id="t3" style="position:absolute;left:372.30px;top:101.25px;font-size:14.83px;line-height:1;white-space:nowrap;color:#1d1d1d;font-weight:400;transform:scaleX(0.9835);transform-origin:0 0;letter-spacing:0.6px">CALENDAR MONTH</div>
<div id="t4" style="position:absolute;left:373.20px;top:128.16px;font-size:25.44px;line-height:1;white-space:nowrap;color:#1d1d1d;font-weight:400;transform:scaleX(0.9980);transform-origin:0 0;">Sep 2024</div>
<svg style="position:absolute;left:1786.00px;top:28.00px;" width="40" height="40" viewBox="2002 64 40 40"><circle cx="2022" cy="84" r="15" fill="none" stroke="#3851a6" stroke-width="2.1"/><path d="M2017.3 80 A5 5 0 1 1 2024.5 84.4 Q2021.8 85.6 2021.8 87.6 L2021.8 88.3" fill="none" stroke="#3851a6" stroke-width="2.1" stroke-linecap="round"/><circle cx="2021.9" cy="91.5" r="1.3" fill="#3851a6"/></svg>
<div style="position:absolute;left:1857.30px;top:22.80px;width:128.40px;height:50.40px;box-sizing:border-box;border:2px solid #a9c2ef;border-radius:10px;background:#fff"></div>
<svg style="position:absolute;left:1872.00px;top:32.00px;" width="30" height="30" viewBox="2088 68 30 30"><path d="M2094 86.4 L2094 90.4 Q2094 92.8 2096.4 92.8 L2109.6 92.8 Q2112 92.8 2112 90.4 L2112 86.4" fill="none" stroke="#3851a6" stroke-width="2.1" stroke-linecap="butt"/><path d="M2103 88 L2103 75 M2097.8 80.2 L2103 75 L2108.2 80.2" fill="none" stroke="#3851a6" stroke-width="2.1" stroke-linecap="square" stroke-linejoin="miter"/></svg>
<div id="t5" style="position:absolute;left:1912.40px;top:38.52px;font-size:18.75px;line-height:1;white-space:nowrap;color:#3851a6;font-weight:400;transform:scaleX(1.0054);transform-origin:0 0;">Export</div>
<div style="position:absolute;left:2004.00px;top:22.50px;width:126.00px;height:51.00px;background:#3851a6;border-radius:10px"></div>
<svg style="position:absolute;left:2020.00px;top:32.00px;" width="28" height="30" viewBox="2236 68 28 30"><g fill="none" stroke="#fff" stroke-width="2.1"><circle cx="2256" cy="77" r="3.2"/><circle cx="2243.9" cy="83.9" r="3.2"/><circle cx="2256" cy="90.9" r="3.2"/><line x1="2246.8" y1="82.2" x2="2253.1" y2="78.6"/><line x1="2246.8" y1="85.6" x2="2253.1" y2="89.2"/></g></svg>
<div id="t6" style="position:absolute;left:2059.30px;top:38.52px;font-size:18.75px;line-height:1;white-space:nowrap;color:#ffffff;font-weight:400;transform:scaleX(1.0250);transform-origin:0 0;">Share</div>
<div style="position:absolute;left:1971.40px;top:96.20px;width:158.20px;height:65.30px;box-sizing:border-box;border:2px solid #c8c8c8;border-radius:10px;background:#fff"></div>
<svg style="position:absolute;left:1994.00px;top:109.00px;" width="38" height="38" viewBox="2210 145 38 38"><g fill="none" stroke="#141414" stroke-width="2.1" stroke-linecap="round"><line x1="2215.5" y1="154.5" x2="2231.6" y2="154.5"/><line x1="2238.2" y1="154.5" x2="2242.5" y2="154.5"/><circle cx="2234.9" cy="154.5" r="3.2"/><line x1="2215.5" y1="165" x2="2219.6" y2="165"/><line x1="2226.2" y1="165" x2="2242.5" y2="165"/><circle cx="2222.9" cy="165" r="3.2"/><line x1="2215.5" y1="175.4" x2="2231.6" y2="175.4"/><line x1="2238.2" y1="175.4" x2="2242.5" y2="175.4"/><circle cx="2234.9" cy="175.4" r="3.2"/></g></svg>
<div id="t7" style="position:absolute;left:2044.60px;top:116.47px;font-size:22.24px;line-height:1;white-space:nowrap;color:#1d1d1d;font-weight:400;transform:scaleX(0.9978);transform-origin:0 0;">Filters</div>
<div id="t8" style="position:absolute;left:138.30px;top:224.35px;font-size:14.83px;line-height:1;white-space:nowrap;color:#1d1d1d;font-weight:400;transform:scaleX(0.9532);transform-origin:0 0;letter-spacing:0.6px">OPERATOR</div>
<div id="t9" style="position:absolute;left:138.30px;top:249.51px;font-size:23.26px;line-height:1;white-space:nowrap;color:#1d1d1d;font-weight:400;transform:scaleX(1.0268);transform-origin:0 0;">Oxley Bus Company</div>
<div id="t10" style="position:absolute;left:387.30px;top:224.35px;font-size:14.83px;line-height:1;white-space:nowrap;color:#1d1d1d;font-weight:400;transform:scaleX(0.9228);transform-origin:0 0;letter-spacing:0.6px">SERVICE</div>
<div id="t11" style="position:absolute;left:387.30px;top:249.51px;font-size:23.26px;line-height:1;white-space:nowrap;color:#1d1d1d;font-weight:400;transform:scaleX(1.0192);transform-origin:0 0;">14 Little Northpool - Oxley Juncti...</div>
<div id="t12" style="position:absolute;left:789.30px;top:224.35px;font-size:14.83px;line-height:1;white-space:nowrap;color:#1d1d1d;font-weight:400;transform:scaleX(1.0050);transform-origin:0 0;letter-spacing:0.6px">INBOUND VARIANT</div>
<div id="t13" style="position:absolute;left:789.30px;top:249.51px;font-size:23.26px;line-height:1;white-space:nowrap;color:#1d1d1d;font-weight:400;transform:scaleX(1.0631);transform-origin:0 0;">All variants</div>
<div id="t14" style="position:absolute;left:966.50px;top:224.35px;font-size:14.83px;line-height:1;white-space:nowrap;color:#1d1d1d;font-weight:400;transform:scaleX(0.9857);transform-origin:0 0;letter-spacing:0.6px">JOURNEYS MATCHED</div>
<div id="t15" style="position:absolute;left:966.50px;top:249.51px;font-size:23.26px;line-height:1;white-space:nowrap;color:#1d1d1d;font-weight:400;transform:scaleX(0.9990);transform-origin:0 0;">3,265/3,986 (81.9%)</div>
<div id="t16" style="position:absolute;left:1211.00px;top:224.35px;font-size:14.83px;line-height:1;white-space:nowrap;color:#1d1d1d;font-weight:400;transform:scaleX(0.9626);transform-origin:0 0;letter-spacing:0.6px">PUNCTUALITY</div>
<div id="t17" style="position:absolute;left:1241.30px;top:249.51px;font-size:23.26px;line-height:1;white-space:nowrap;color:#1d1d1d;font-weight:400;transform:scaleX(0.9084);transform-origin:0 0;">87.8%</div>
<div id="t18" style="position:absolute;left:1360.80px;top:224.35px;font-size:14.83px;line-height:1;white-space:nowrap;color:#1d1d1d;font-weight:400;transform:scaleX(0.9179);transform-origin:0 0;letter-spacing:0.6px">RELIABILITY</div>
<div id="t19" style="position:absolute;left:1390.80px;top:249.51px;font-size:23.26px;line-height:1;white-space:nowrap;color:#1d1d1d;font-weight:400;transform:scaleX(0.8554);transform-origin:0 0;">81.4%</div>
<svg style="position:absolute;left:1212.50px;top:251.00px;" width="20" height="20" viewBox="1428.5 287 20 20"><circle cx="1438.5" cy="297.2" r="9.2" fill="#e51326"/><path d="M1435.5 294.2 L1441.5 300.2 M1441.5 294.2 L1435.5 300.2" stroke="#fff" stroke-width="2" stroke-linecap="round"/></svg>
<svg style="position:absolute;left:1362.20px;top:251.00px;" width="20" height="20" viewBox="1578.2 287 20 20"><circle cx="1588.2" cy="297.2" r="9.2" fill="#e51326"/><path d="M1585.2 294.2 L1591.2 300.2 M1591.2 294.2 L1585.2 300.2" stroke="#fff" stroke-width="2" stroke-linecap="round"/></svg>
<div style="position:absolute;left:1954.50px;top:232.60px;width:14.60px;height:14.80px;background:#1b1b1b;border-radius:3px"></div>
<div id="t20" style="position:absolute;left:1974.70px;top:230.46px;font-size:19.19px;line-height:1;white-space:nowrap;color:#1d1d1d;font-weight:400;transform:scaleX(0.8473);transform-origin:0 0;">81.9%</div>
<svg style="position:absolute;left:2028.00px;top:230.00px;" width="22" height="20" viewBox="2244 266 22 20"><rect x="2249.5" y="270.5" width="10" height="10" rx="2" transform="rotate(45 2254.5 275.5)" fill="none" stroke="#1b1b1b" stroke-width="1.8"/><line x1="2251.3" y1="275.5" x2="2257.7" y2="275.5" stroke="#1b1b1b" stroke-width="1.8"/></svg>
<div id="t21" style="position:absolute;left:2051.00px;top:230.46px;font-size:19.19px;line-height:1;white-space:nowrap;color:#1d1d1d;font-weight:400;transform:scaleX(0.8381);transform-origin:0 0;">17.9%</div>
<div style="position:absolute;left:1510.70px;top:259.60px;width:511.00px;height:11.80px;background:#1b1b1b;border-radius:3px 0 0 3px"></div>
<svg style="position:absolute;left:2024.00px;top:258.00px;" width="90" height="15" viewBox="2240 294 90 15"><rect x="2241.7" y="296" width="70.6" height="11" fill="#fff" stroke="#8a8a8a" stroke-width="1.1"/><rect x="2244.40" y="296.90" width="1.3" height="1.3" fill="#333"/><rect x="2250.40" y="296.90" width="1.3" height="1.3" fill="#333"/><rect x="2256.40" y="296.90" width="1.3" height="1.3" fill="#333"/><rect x="2262.40" y="296.90" width="1.3" height="1.3" fill="#333"/><rect x="2268.40" y="296.90" width="1.3" height="1.3" fill="#333"/><rect x="2274.40" y="296.90" width="1.3" height="1.3" fill="#333"/><rect x="2280.40" y="296.90" width="1.3" height="1.3" fill="#333"/><rect x="2286.40" y="296.90" width="1.3" height="1.3" fill="#333"/><rect x="2292.40" y="296.90" width="1.3" height="1.3" fill="#333"/><rect x="2298.40" y="296.90" width="1.3" height="1.3" fill="#333"/><rect x="2304.40" y="296.90" width="1.3" height="1.3" fill="#333"/><rect x="2310.40" y="296.90" width="1.3" height="1.3" fill="#333"/><rect x="2247.40" y="300.00" width="1.3" height="1.3" fill="#333"/><rect x="2253.40" y="300.00" width="1.3" height="1.3" fill="#333"/><rect x="2259.40" y="300.00" width="1.3" height="1.3" fill="#333"/><rect x="2265.40" y="300.00" width="1.3" height="1.3" fill="#333"/><rect x="2271.40" y="300.00" width="1.3" height="1.3" fill="#333"/><rect x="2277.40" y="300.00" width="1.3" height="1.3" fill="#333"/><rect x="2283.40" y="300.00" width="1.3" height="1.3" fill="#333"/><rect x="2289.40" y="300.00" width="1.3" height="1.3" fill="#333"/><rect x="2295.40" y="300.00" width="1.3" height="1.3" fill="#333"/><rect x="2301.40" y="300.00" width="1.3" height="1.3" fill="#333"/><rect x="2307.40" y="300.00" width="1.3" height="1.3" fill="#333"/><rect x="2244.40" y="303.10" width="1.3" height="1.3" fill="#333"/><rect x="2250.40" y="303.10" width="1.3" height="1.3" fill="#333"/><rect x="2256.40" y="303.10" width="1.3" height="1.3" fill="#333"/><rect x="2262.40" y="303.10" width="1.3" height="1.3" fill="#333"/><rect x="2268.40" y="303.10" width="1.3" height="1.3" fill="#333"/><rect x="2274.40" y="303.10" width="1.3" height="1.3" fill="#333"/><rect x="2280.40" y="303.10" width="1.3" height="1.3" fill="#333"/><rect x="2286.40" y="303.10" width="1.3" height="1.3" fill="#333"/><rect x="2292.40" y="303.10" width="1.3" height="1.3" fill="#333"/><rect x="2298.40" y="303.10" width="1.3" height="1.3" fill="#333"/><rect x="2304.40" y="303.10" width="1.3" height="1.3" fill="#333"/><rect x="2310.40" y="303.10" width="1.3" height="1.3" fill="#333"/><defs><clipPath id="hc"><path d="M2316.3 295.5 L2325.7 295.5 Q2327.7 295.5 2327.7 297.5 L2327.7 305.4 Q2327.7 307.4 2325.7 307.4 L2316.3 307.4 Z"/></clipPath></defs><g clip-path="url(#hc)"><rect x="2316.3" y="295.5" width="11.4" height="11.9" fill="#fff"/><g stroke="#2a2a2a" stroke-width="1.5"><line x1="2306.0" y1="310" x2="2322.0" y2="294"/><line x1="2310.6" y1="310" x2="2326.6" y2="294"/><line x1="2315.2" y1="310" x2="2331.2" y2="294"/><line x1="2319.8" y1="310" x2="2335.8" y2="294"/><line x1="2324.4" y1="310" x2="2340.4" y2="294"/><line x1="2329.0" y1="310" x2="2345.0" y2="294"/><line x1="2333.6" y1="310" x2="2349.6" y2="294"/></g></g><path d="M2316.8 296 L2325.7 296 Q2327.2 296 2327.2 297.5 L2327.2 305.4 Q2327.2 306.9 2325.7 306.9 L2316.8 306.9 Z" fill="none" stroke="#8a8a8a" stroke-width="1"/></svg>
<div id="t22" style="position:absolute;left:145.00px;top:351.80px;font-size:22.67px;line-height:1;white-space:nowrap;color:#1d1d1d;font-weight:400;transform:scaleX(1.0238);transform-origin:0 0;">Date</div>
<div style="position:absolute;left:209.00px;top:348.50px;width:29.00px;height:28.70px;box-sizing:border-box;border:2px solid #55ade0;border-radius:5px;background:#e8f5fd"></div>
<svg style="position:absolute;left:214.00px;top:352.00px;" width="20" height="22" viewBox="430 388 20 22"><path d="M439.5 404 L439.5 393 M435.3 397 L439.5 392.6 L443.7 397" fill="none" stroke="#1b1b1b" stroke-width="1.8" stroke-linecap="round" stroke-linejoin="round"/></svg>
<div style="position:absolute;left:317.80px;top:335.80px;width:1.50px;height:53.60px;background:#cfcfcf"></div>
<div id="t23" style="position:absolute;left:354.50px;top:340.41px;font-size:21.37px;line-height:1;white-space:nowrap;color:#1d1d1d;font-weight:400;transform:scaleX(1.0824);transform-origin:0 0;">OTP at First stop</div>
<div id="t24" style="position:absolute;left:354.90px;top:374.22px;font-size:14.97px;line-height:1;white-space:nowrap;color:#1d1d1d;font-weight:400;transform:scaleX(0.9460);transform-origin:0 0;letter-spacing:0.6px">SORTED BY SCHEDULED START TIME</div>
<div style="position:absolute;left:1272.00px;top:337.70px;width:224.50px;height:50.20px;box-sizing:border-box;border:2px solid #2a7ba8;border-radius:26px;background:#e9f6fd"></div>
<div style="position:absolute;left:1291.60px;top:355.50px;width:14.70px;height:14.70px;background:#1b1b1b;border-radius:3.5px"></div>
<div id="t25" style="position:absolute;left:1314.90px;top:353.02px;font-size:18.75px;line-height:1;white-space:nowrap;color:#1d1d1d;font-weight:400;transform:scaleX(1.0859);transform-origin:0 0;">Matched</div>
<div style="position:absolute;left:1406.00px;top:352.30px;width:2.00px;height:18.30px;background:#4a8fb8"></div>
<svg style="position:absolute;left:1414.00px;top:352.00px;" width="42" height="20" viewBox="1630 388 42 20"><circle cx="1662" cy="397.4" r="6" fill="#a3a3a3"/><circle cx="1656" cy="397.4" r="7" fill="#e9f6fd"/><circle cx="1656" cy="397.4" r="6" fill="#ee7203"/><circle cx="1650" cy="397.4" r="7" fill="#e9f6fd"/><circle cx="1650" cy="397.4" r="6" fill="#17a086"/><circle cx="1644" cy="397.4" r="7" fill="#e9f6fd"/><circle cx="1644" cy="397.4" r="6" fill="#e51326"/></svg>
<svg style="position:absolute;left:1456.00px;top:352.00px;" width="22" height="18" viewBox="1672 388 22 18"><path d="M1677 394.6 L1683 400.6 L1689 394.6" fill="none" stroke="#1b1b1b" stroke-width="2" stroke-linecap="round" stroke-linejoin="round"/></svg>
<div style="position:absolute;left:1508.90px;top:337.70px;width:133.60px;height:50.20px;box-sizing:border-box;border:2px solid #2a7ba8;border-radius:26px;background:#e9f6fd"></div>
<svg style="position:absolute;left:1524.00px;top:352.00px;" width="24" height="22" viewBox="1740 388 24 22"><rect x="1747" y="393" width="10.4" height="10.4" rx="2" transform="rotate(45 1752.2 398.2)" fill="none" stroke="#1b1b1b" stroke-width="1.8"/><line x1="1748.9" y1="398.2" x2="1755.5" y2="398.2" stroke="#1b1b1b" stroke-width="1.8"/></svg>
<div id="t26" style="position:absolute;left:1551.60px;top:353.02px;font-size:18.75px;line-height:1;white-space:nowrap;color:#1d1d1d;font-weight:400;transform:scaleX(1.0720);transform-origin:0 0;">No data</div>
<div style="position:absolute;left:1654.70px;top:337.70px;width:152.60px;height:50.20px;box-sizing:border-box;border:2px solid #2a7ba8;border-radius:26px;background:#e9f6fd"></div>
<svg style="position:absolute;left:1670.00px;top:352.00px;" width="24" height="22" viewBox="1886 388 24 22"><circle cx="1897.5" cy="398.4" r="6.6" fill="none" stroke="#1b1b1b" stroke-width="1.8"/><line x1="1902.2" y1="393.7" x2="1892.8" y2="403.1" stroke="#1b1b1b" stroke-width="1.8"/></svg>
<div id="t27" style="position:absolute;left:1697.00px;top:353.02px;font-size:18.75px;line-height:1;white-space:nowrap;color:#1d1d1d;font-weight:400;transform:scaleX(1.0865);transform-origin:0 0;">Cancelled</div>
<div style="position:absolute;left:1831.00px;top:350.80px;width:1.50px;height:24.00px;background:#b9b9b9"></div>
<div style="position:absolute;left:1855.70px;top:337.70px;width:250.10px;height:50.20px;box-sizing:border-box;border:2px solid #2a7ba8;border-radius:26px;background:#e9f6fd"></div>
<svg style="position:absolute;left:1870.00px;top:350.00px;" width="26" height="24" viewBox="2086 386 26 24"><path d="M2099.5 392.3 L2093.6 392.3 Q2092.2 392.3 2092.2 393.7 L2092.2 405.6 L2095.6 402.6 L2103.6 402.6 Q2105 402.6 2105 401.2 L2105 397.6" fill="none" stroke="#3851a6" stroke-width="1.7" stroke-linejoin="round" stroke-linecap="round"/><g stroke="#3851a6" stroke-width="1.6" stroke-linecap="round"><line x1="2095.4" y1="396" x2="2101.2" y2="396"/><line x1="2095.4" y1="399.1" x2="2098.6" y2="399.1"/></g><circle cx="2104.5" cy="392.9" r="2.9" fill="#3851a6"/></svg>
<div id="t28" style="position:absolute;left:1898.40px;top:353.02px;font-size:18.75px;line-height:1;white-space:nowrap;color:#1d1d1d;font-weight:400;transform:scaleX(1.0679);transform-origin:0 0;">Passenger sentiment</div>
<div style="position:absolute;left:364.00px;top:463.50px;width:1731.00px;height:2.00px;background:#838383"></div>
<div style="position:absolute;left:364.00px;top:453.00px;width:4.00px;height:24.00px;background:#404040"></div>
<div style="position:absolute;left:2091.50px;top:453.00px;width:4.00px;height:24.00px;background:#404040"></div>
<div style="position:absolute;left:415.82px;top:458.80px;width:2.00px;height:12.20px;background:#808080"></div>
<div style="position:absolute;left:466.64px;top:458.80px;width:2.00px;height:12.20px;background:#808080"></div>
<div style="position:absolute;left:517.46px;top:458.80px;width:2.00px;height:12.20px;background:#808080"></div>
<div style="position:absolute;left:568.28px;top:458.80px;width:2.00px;height:12.20px;background:#808080"></div>
<div style="position:absolute;left:619.10px;top:458.80px;width:2.00px;height:12.20px;background:#808080"></div>
<div style="position:absolute;left:669.92px;top:458.80px;width:2.00px;height:12.20px;background:#808080"></div>
<div style="position:absolute;left:720.74px;top:458.80px;width:2.00px;height:12.20px;background:#808080"></div>
<div style="position:absolute;left:771.56px;top:458.80px;width:2.00px;height:12.20px;background:#808080"></div>
<div style="position:absolute;left:822.38px;top:458.80px;width:2.00px;height:12.20px;background:#808080"></div>
<div style="position:absolute;left:873.20px;top:458.80px;width:2.00px;height:12.20px;background:#808080"></div>
<div style="position:absolute;left:924.02px;top:458.80px;width:2.00px;height:12.20px;background:#808080"></div>
<div style="position:absolute;left:974.84px;top:458.80px;width:2.00px;height:12.20px;background:#808080"></div>
<div style="position:absolute;left:1025.66px;top:458.80px;width:2.00px;height:12.20px;background:#808080"></div>
<div style="position:absolute;left:1076.48px;top:458.80px;width:2.00px;height:12.20px;background:#808080"></div>
<div style="position:absolute;left:1127.30px;top:458.80px;width:2.00px;height:12.20px;background:#808080"></div>
<div style="position:absolute;left:1178.12px;top:458.80px;width:2.00px;height:12.20px;background:#808080"></div>
<div style="position:absolute;left:1228.94px;top:458.80px;width:2.00px;height:12.20px;background:#808080"></div>
<div style="position:absolute;left:1279.76px;top:458.80px;width:2.00px;height:12.20px;background:#808080"></div>
<div style="position:absolute;left:1330.58px;top:458.80px;width:2.00px;height:12.20px;background:#808080"></div>
<div style="position:absolute;left:1381.40px;top:458.80px;width:2.00px;height:12.20px;background:#808080"></div>
<div style="position:absolute;left:1432.22px;top:458.80px;width:2.00px;height:12.20px;background:#808080"></div>
<div style="position:absolute;left:1483.04px;top:458.80px;width:2.00px;height:12.20px;background:#808080"></div>
<div style="position:absolute;left:1533.86px;top:458.80px;width:2.00px;height:12.20px;background:#808080"></div>
<div style="position:absolute;left:1584.68px;top:458.80px;width:2.00px;height:12.20px;background:#808080"></div>
<div style="position:absolute;left:1635.50px;top:458.80px;width:2.00px;height:12.20px;background:#808080"></div>
<div style="position:absolute;left:1686.32px;top:458.80px;width:2.00px;height:12.20px;background:#808080"></div>
<div style="position:absolute;left:1737.14px;top:458.80px;width:2.00px;height:12.20px;background:#808080"></div>
<div style="position:absolute;left:1787.96px;top:458.80px;width:2.00px;height:12.20px;background:#808080"></div>
<div style="position:absolute;left:1838.78px;top:458.80px;width:2.00px;height:12.20px;background:#808080"></div>
<div style="position:absolute;left:1889.60px;top:458.80px;width:2.00px;height:12.20px;background:#808080"></div>
<div style="position:absolute;left:1940.42px;top:458.80px;width:2.00px;height:12.20px;background:#808080"></div>
<div style="position:absolute;left:1991.24px;top:458.80px;width:2.00px;height:12.20px;background:#808080"></div>
<div style="position:absolute;left:2042.06px;top:458.80px;width:2.00px;height:12.20px;background:#808080"></div>
<div id="t29" style="position:absolute;left:344.00px;top:487.81px;font-size:15.70px;line-height:1;white-space:nowrap;color:#333333;font-weight:400;transform:scaleX(1.0535);transform-origin:0 0;letter-spacing:0.5px">06:00</div>
<div id="t30" style="position:absolute;left:445.64px;top:487.81px;font-size:15.70px;line-height:1;white-space:nowrap;color:#333333;font-weight:400;transform:scaleX(1.0535);transform-origin:0 0;letter-spacing:0.5px">07:00</div>
<div id="t31" style="position:absolute;left:547.28px;top:487.81px;font-size:15.70px;line-height:1;white-space:nowrap;color:#333333;font-weight:400;transform:scaleX(1.0535);transform-origin:0 0;letter-spacing:0.5px">08:00</div>
<div id="t32" style="position:absolute;left:648.92px;top:487.81px;font-size:15.70px;line-height:1;white-space:nowrap;color:#333333;font-weight:400;transform:scaleX(1.0535);transform-origin:0 0;letter-spacing:0.5px">09:00</div>
<div id="t33" style="position:absolute;left:750.56px;top:487.81px;font-size:15.70px;line-height:1;white-space:nowrap;color:#333333;font-weight:400;transform:scaleX(1.0535);transform-origin:0 0;letter-spacing:0.5px">10:00</div>
<div id="t34" style="position:absolute;left:852.20px;top:487.81px;font-size:15.70px;line-height:1;white-space:nowrap;color:#333333;font-weight:400;transform:scaleX(1.0839);transform-origin:0 0;letter-spacing:0.5px">11:00</div>
<div id="t35" style="position:absolute;left:953.84px;top:487.81px;font-size:15.70px;line-height:1;white-space:nowrap;color:#333333;font-weight:400;transform:scaleX(1.0535);transform-origin:0 0;letter-spacing:0.5px">12:00</div>
<div id="t36" style="position:absolute;left:1055.48px;top:487.81px;font-size:15.70px;line-height:1;white-space:nowrap;color:#333333;font-weight:400;transform:scaleX(1.0535);transform-origin:0 0;letter-spacing:0.5px">13:00</div>
<div id="t37" style="position:absolute;left:1157.12px;top:487.81px;font-size:15.70px;line-height:1;white-space:nowrap;color:#333333;font-weight:400;transform:scaleX(1.0535);transform-origin:0 0;letter-spacing:0.5px">14:00</div>
<div id="t38" style="position:absolute;left:1258.76px;top:487.81px;font-size:15.70px;line-height:1;white-space:nowrap;color:#333333;font-weight:400;transform:scaleX(1.0535);transform-origin:0 0;letter-spacing:0.5px">15:00</div>
<div id="t39" style="position:absolute;left:1360.40px;top:487.81px;font-size:15.70px;line-height:1;white-space:nowrap;color:#333333;font-weight:400;transform:scaleX(1.0535);transform-origin:0 0;letter-spacing:0.5px">16:00</div>
<div id="t40" style="position:absolute;left:1462.04px;top:487.81px;font-size:15.70px;line-height:1;white-space:nowrap;color:#333333;font-weight:400;transform:scaleX(1.0535);transform-origin:0 0;letter-spacing:0.5px">17:00</div>
<div id="t41" style="position:absolute;left:1563.68px;top:487.81px;font-size:15.70px;line-height:1;white-space:nowrap;color:#333333;font-weight:400;transform:scaleX(1.0535);transform-origin:0 0;letter-spacing:0.5px">18:00</div>
<div id="t42" style="position:absolute;left:1665.32px;top:487.81px;font-size:15.70px;line-height:1;white-space:nowrap;color:#333333;font-weight:400;transform:scaleX(1.0535);transform-origin:0 0;letter-spacing:0.5px">19:00</div>
<div id="t43" style="position:absolute;left:1766.96px;top:487.81px;font-size:15.70px;line-height:1;white-space:nowrap;color:#333333;font-weight:400;transform:scaleX(1.0535);transform-origin:0 0;letter-spacing:0.5px">20:00</div>
<div id="t44" style="position:absolute;left:1868.60px;top:487.81px;font-size:15.70px;line-height:1;white-space:nowrap;color:#333333;font-weight:400;transform:scaleX(1.0535);transform-origin:0 0;letter-spacing:0.5px">21:00</div>
<div id="t45" style="position:absolute;left:1970.24px;top:487.81px;font-size:15.70px;line-height:1;white-space:nowrap;color:#333333;font-weight:400;transform:scaleX(1.0535);transform-origin:0 0;letter-spacing:0.5px">22:00</div>
<div id="t46" style="position:absolute;left:2071.88px;top:487.81px;font-size:15.70px;line-height:1;white-space:nowrap;color:#333333;font-weight:400;transform:scaleX(1.0535);transform-origin:0 0;letter-spacing:0.5px">23:00</div>
<div id="t47" style="position:absolute;left:138.50px;top:755.27px;font-size:18.46px;line-height:1;white-space:nowrap;color:#1d1d1d;font-weight:400;transform:scaleX(1.0194);transform-origin:0 0;">Tue 29 Sep</div>
<div id="t48" style="position:absolute;left:138.50px;top:563.27px;font-size:18.46px;line-height:1;white-space:nowrap;color:#1d1d1d;font-weight:400;transform:scaleX(1.0194);transform-origin:0 0;">Wed 30 Sep</div>
<div id="t49" style="position:absolute;left:138.50px;top:947.27px;font-size:18.46px;line-height:1;white-space:nowrap;color:#1d1d1d;font-weight:400;transform:scaleX(1.0194);transform-origin:0 0;">Mon 28 Sep</div>
<div id="t50" style="position:absolute;left:138.50px;top:1139.27px;font-size:18.46px;line-height:1;white-space:nowrap;color:#1d1d1d;font-weight:400;transform:scaleX(1.0194);transform-origin:0 0;">Sun 27 Sep</div>
<div id="t51" style="position:absolute;left:138.50px;top:1331.27px;font-size:18.46px;line-height:1;white-space:nowrap;color:#1d1d1d;font-weight:400;transform:scaleX(1.0194);transform-origin:0 0;">Sat 26 Sep</div>
<div id="t52" style="position:absolute;left:138.50px;top:1523.27px;font-size:18.46px;line-height:1;white-space:nowrap;color:#1d1d1d;font-weight:400;transform:scaleX(1.0194);transform-origin:0 0;">Fri 25 May</div>
</div></body></html>
